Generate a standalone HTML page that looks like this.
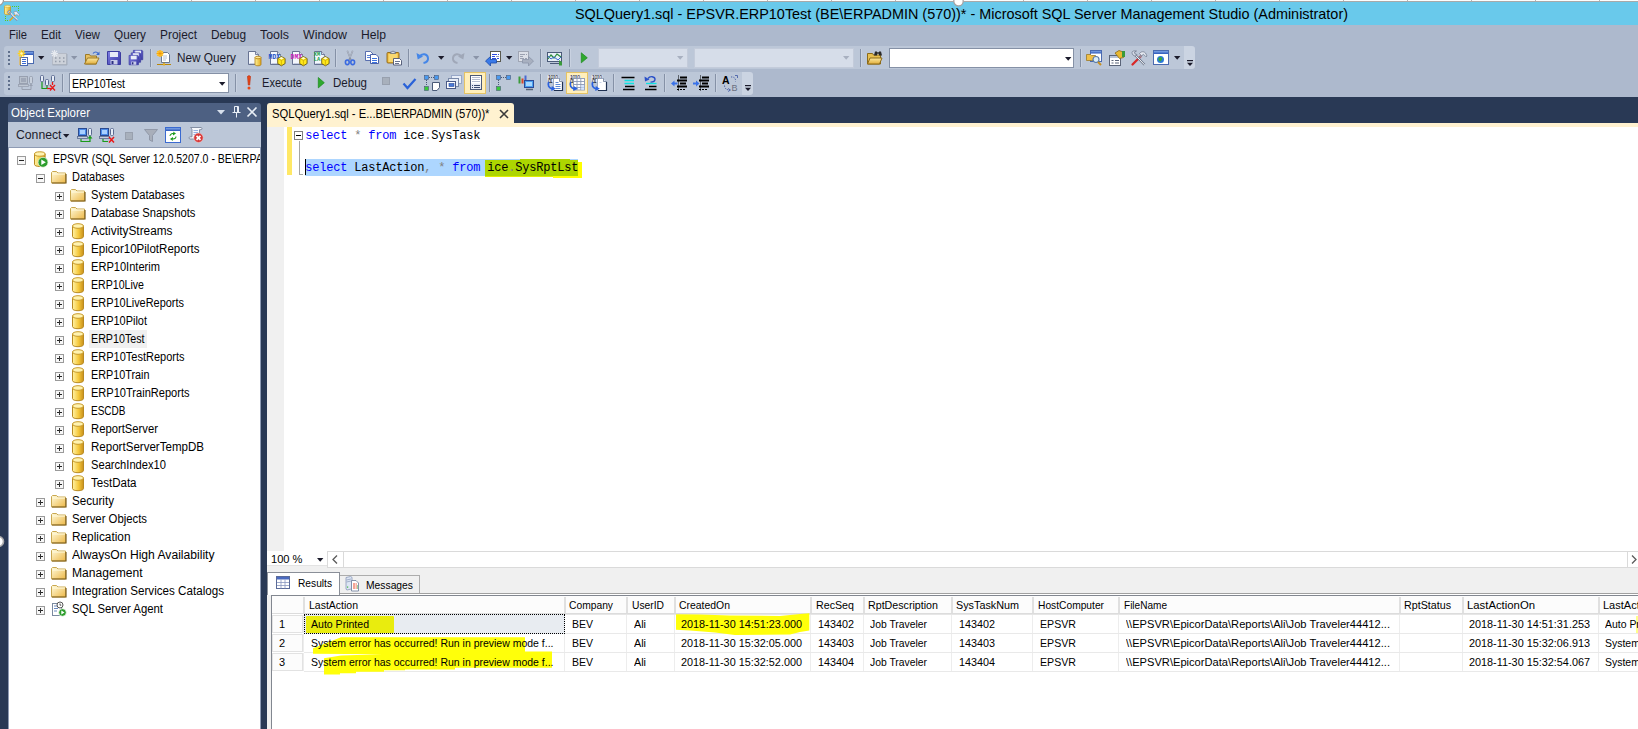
<!DOCTYPE html>
<html lang="en"><head><meta charset="utf-8"><title>SQLQuery1.sql - Microsoft SQL Server Management Studio</title><style>
html,body{margin:0;padding:0;}
body{width:1638px;height:729px;overflow:hidden;position:relative;background:#fff;font-family:"Liberation Sans", sans-serif;font-size:12px;color:#000;}
#root{position:absolute;left:0;top:0;width:1638px;height:729px;overflow:hidden;}
#root div,#root span.t,#root svg{position:absolute;}
#root div{box-sizing:border-box;}
span.t{white-space:pre;transform-origin:0 0;}
svg{overflow:visible;}
</style></head><body><div id="root">
<div style="left:0px;top:0px;width:1638px;height:2px;background:#fdfdfd;border-bottom:1px solid #a9a9a9;"></div>
<div style="left:63px;top:0px;width:1px;height:1px;background:#b4b4b4;"></div>
<div style="left:127px;top:0px;width:1px;height:1px;background:#b4b4b4;"></div>
<div style="left:191px;top:0px;width:1px;height:1px;background:#b4b4b4;"></div>
<div style="left:255px;top:0px;width:1px;height:1px;background:#b4b4b4;"></div>
<div style="left:319px;top:0px;width:1px;height:1px;background:#b4b4b4;"></div>
<div style="left:383px;top:0px;width:1px;height:1px;background:#b4b4b4;"></div>
<div style="left:447px;top:0px;width:1px;height:1px;background:#b4b4b4;"></div>
<div style="left:511px;top:0px;width:1px;height:1px;background:#b4b4b4;"></div>
<div style="left:575px;top:0px;width:1px;height:1px;background:#b4b4b4;"></div>
<div style="left:639px;top:0px;width:1px;height:1px;background:#b4b4b4;"></div>
<div style="left:703px;top:0px;width:1px;height:1px;background:#b4b4b4;"></div>
<div style="left:767px;top:0px;width:1px;height:1px;background:#b4b4b4;"></div>
<div style="left:831px;top:0px;width:1px;height:1px;background:#b4b4b4;"></div>
<div style="left:895px;top:0px;width:1px;height:1px;background:#b4b4b4;"></div>
<div style="left:959px;top:0px;width:1px;height:1px;background:#b4b4b4;"></div>
<div style="left:1023px;top:0px;width:1px;height:1px;background:#b4b4b4;"></div>
<div style="left:1087px;top:0px;width:1px;height:1px;background:#b4b4b4;"></div>
<div style="left:1151px;top:0px;width:1px;height:1px;background:#b4b4b4;"></div>
<div style="left:1215px;top:0px;width:1px;height:1px;background:#b4b4b4;"></div>
<div style="left:1279px;top:0px;width:1px;height:1px;background:#b4b4b4;"></div>
<div style="left:1343px;top:0px;width:1px;height:1px;background:#b4b4b4;"></div>
<div style="left:1407px;top:0px;width:1px;height:1px;background:#b4b4b4;"></div>
<div style="left:1471px;top:0px;width:1px;height:1px;background:#b4b4b4;"></div>
<div style="left:1535px;top:0px;width:1px;height:1px;background:#b4b4b4;"></div>
<div style="left:1599px;top:0px;width:1px;height:1px;background:#b4b4b4;"></div>
<div style="left:0px;top:2px;width:1638px;height:23px;background:#69C9EB;"></div>
<span id="t0" class="t " style="left:575px;top:3.5px;font-size:15px;line-height:20px;transform:scaleX(0.9609);">SQLQuery1.sql - EPSVR.ERP10Test (BE\ERPADMIN (570))* - Microsoft SQL Server Management Studio (Administrator)</span>
<div style="left:0px;top:25px;width:1638px;height:72px;background:#ADB9CD;"></div>
<span id="t1" class="t " style="left:9px;top:27px;font-size:12px;line-height:16px;color:#1B1B2B;transform:scaleX(0.9305);">File</span>
<span id="t2" class="t " style="left:41px;top:27px;font-size:12px;line-height:16px;color:#1B1B2B;transform:scaleX(0.9668);">Edit</span>
<span id="t3" class="t " style="left:75px;top:27px;font-size:12px;line-height:16px;color:#1B1B2B;transform:scaleX(0.9691);">View</span>
<span id="t4" class="t " style="left:114px;top:27px;font-size:12px;line-height:16px;color:#1B1B2B;transform:scaleX(0.9790);">Query</span>
<span id="t5" class="t " style="left:160px;top:27px;font-size:12px;line-height:16px;color:#1B1B2B;transform:scaleX(0.9904);">Project</span>
<span id="t6" class="t " style="left:211px;top:27px;font-size:12px;line-height:16px;color:#1B1B2B;transform:scaleX(0.9894);">Debug</span>
<span id="t7" class="t " style="left:260px;top:27px;font-size:12px;line-height:16px;color:#1B1B2B;transform:scaleX(1.0351);">Tools</span>
<span id="t8" class="t " style="left:303px;top:27px;font-size:12px;line-height:16px;color:#1B1B2B;transform:scaleX(1.0307);">Window</span>
<span id="t9" class="t " style="left:361px;top:27px;font-size:12px;line-height:16px;color:#1B1B2B;transform:scaleX(1.0127);">Help</span>
<div style="left:4px;top:46px;width:1180px;height:23px;background:#BCC7D8;border-radius:3px 0 0 3px;"></div>
<div style="left:1184px;top:46px;width:11px;height:23px;background:#CBD4E2;border-radius:0 3px 3px 0;"></div>
<div style="left:4px;top:72px;width:738px;height:23px;background:#BCC7D8;border-radius:3px 0 0 3px;"></div>
<div style="left:742px;top:72px;width:11px;height:23px;background:#CBD4E2;border-radius:0 3px 3px 0;"></div>
<div style="left:8px;top:51px;width:2px;height:2px;background:#60708C;"></div>
<div style="left:8px;top:55px;width:2px;height:2px;background:#60708C;"></div>
<div style="left:8px;top:59px;width:2px;height:2px;background:#60708C;"></div>
<div style="left:8px;top:63px;width:2px;height:2px;background:#60708C;"></div>
<div style="left:8px;top:76px;width:2px;height:2px;background:#60708C;"></div>
<div style="left:8px;top:80px;width:2px;height:2px;background:#60708C;"></div>
<div style="left:8px;top:84px;width:2px;height:2px;background:#60708C;"></div>
<div style="left:8px;top:88px;width:2px;height:2px;background:#60708C;"></div>
<div style="left:150px;top:49px;width:1px;height:18px;background:#8591A6;"></div>
<div style="left:151px;top:49px;width:1px;height:18px;background:#C9D2E1;"></div>
<div style="left:335px;top:49px;width:1px;height:18px;background:#8591A6;"></div>
<div style="left:336px;top:49px;width:1px;height:18px;background:#C9D2E1;"></div>
<div style="left:408px;top:49px;width:1px;height:18px;background:#8591A6;"></div>
<div style="left:409px;top:49px;width:1px;height:18px;background:#C9D2E1;"></div>
<div style="left:540px;top:49px;width:1px;height:18px;background:#8591A6;"></div>
<div style="left:541px;top:49px;width:1px;height:18px;background:#C9D2E1;"></div>
<div style="left:569px;top:49px;width:1px;height:18px;background:#8591A6;"></div>
<div style="left:570px;top:49px;width:1px;height:18px;background:#C9D2E1;"></div>
<div style="left:860px;top:49px;width:1px;height:18px;background:#8591A6;"></div>
<div style="left:861px;top:49px;width:1px;height:18px;background:#C9D2E1;"></div>
<div style="left:1080px;top:49px;width:1px;height:18px;background:#8591A6;"></div>
<div style="left:1081px;top:49px;width:1px;height:18px;background:#C9D2E1;"></div>
<div style="left:62px;top:74px;width:1px;height:18px;background:#8591A6;"></div>
<div style="left:63px;top:74px;width:1px;height:18px;background:#C9D2E1;"></div>
<div style="left:235px;top:74px;width:1px;height:18px;background:#8591A6;"></div>
<div style="left:236px;top:74px;width:1px;height:18px;background:#C9D2E1;"></div>
<div style="left:489px;top:74px;width:1px;height:18px;background:#8591A6;"></div>
<div style="left:490px;top:74px;width:1px;height:18px;background:#C9D2E1;"></div>
<div style="left:540px;top:74px;width:1px;height:18px;background:#8591A6;"></div>
<div style="left:541px;top:74px;width:1px;height:18px;background:#C9D2E1;"></div>
<div style="left:613px;top:74px;width:1px;height:18px;background:#8591A6;"></div>
<div style="left:614px;top:74px;width:1px;height:18px;background:#C9D2E1;"></div>
<div style="left:664px;top:74px;width:1px;height:18px;background:#8591A6;"></div>
<div style="left:665px;top:74px;width:1px;height:18px;background:#C9D2E1;"></div>
<div style="left:715px;top:74px;width:1px;height:18px;background:#8591A6;"></div>
<div style="left:716px;top:74px;width:1px;height:18px;background:#C9D2E1;"></div>
<svg width="0" height="0" style="left:0;top:0"><defs><linearGradient id="bl" x1="0" y1="0" x2="0" y2="1"><stop offset="0" stop-color="#7FA6E8"/><stop offset="1" stop-color="#2A55B8"/></linearGradient><linearGradient id="yl" x1="0" y1="0" x2="1" y2="0"><stop offset="0" stop-color="#FFF39A"/><stop offset="1" stop-color="#E0A81E"/></linearGradient><linearGradient id="fl" x1="0" y1="0" x2="0" y2="1"><stop offset="0" stop-color="#FCE9A0"/><stop offset="1" stop-color="#E2AE3C"/></linearGradient><linearGradient id="sv" x1="0" y1="0" x2="1" y2="1"><stop offset="0" stop-color="#8080E4"/><stop offset="1" stop-color="#3838A4"/></linearGradient></defs></svg>
<svg style="left:18px;top:50px;" width="16" height="16" viewBox="0 0 16 16"><rect x="3.500" y="1.500" width="12" height="12" fill="#fff" stroke="#4A6AB0"/><rect x="4" y="2" width="11" height="3" fill="url(#bl)"/><rect x="2.500" y="7.500" width="7" height="8" fill="#fff" stroke="#4A6AB0"/><path d="M4 9.500h4M4 11.500h4M4 13.500h4" stroke="#3A6AD0"/><path d="M3.50 3.50L7.30 3.50M3.50 3.50L6.19 6.19M3.50 3.50L3.50 7.30M3.50 3.50L0.81 6.19M3.50 3.50L-0.30 3.50M3.50 3.50L0.81 0.81M3.50 3.50L3.50 -0.30M3.50 3.50L6.19 0.81" stroke="#FFD21E" stroke-width="1.3" fill="none"/><circle cx="3.500" cy="3.500" r="1.200" fill="#FFF8C0"/><path d="M2 7v8" stroke="#F0B020" stroke-width="1"/></svg>
<svg style="left:38.3px;top:55.7px;" width="7" height="4" viewBox="0 0 7 4"><path d="M0 0h6.400l-3.200 3.700z" fill="#1B1B2B"/></svg>
<svg style="left:51px;top:50px;" width="16" height="16" viewBox="0 0 16 16"><rect x="1.500" y="3.500" width="14" height="11" fill="#CDD2DA" stroke="#B4BAC6"/><path d="M1.500 15h14.500v-11" fill="none" stroke="#A0A8B6" stroke-width="0.800"/><path d="M4 8h1.500M8 8h1.500M12 8h1.500M4 11.500h1.500M8 11.500h1.500M12 11.500h1.500" stroke="#959DAB" stroke-width="1.500"/><path d="M3.50 3.50L7.10 3.50M3.50 3.50L6.05 6.05M3.50 3.50L3.50 7.10M3.50 3.50L0.95 6.05M3.50 3.50L-0.10 3.50M3.50 3.50L0.95 0.95M3.50 3.50L3.50 -0.10M3.50 3.50L6.05 0.95" stroke="#E6EAF0" stroke-width="1.1" fill="none"/></svg>
<svg style="left:71.3px;top:55.7px;" width="7" height="4" viewBox="0 0 7 4"><path d="M0 0h6.400l-3.200 3.700z" fill="#8A94A8"/></svg>
<svg style="left:84px;top:50px;" width="16" height="16" viewBox="0 0 16 16"><path d="M1.500 4.500h4l1 1.500h6v8h-11z" fill="#E8C060" stroke="#9C7A28"/><path d="M0.500 14l3-6h11.500l-3 6z" fill="url(#fl)" stroke="#9C7A28"/><path d="M9 3.500c1.500-2 4-2 5 0" fill="none" stroke="#3A6AD0" stroke-width="1.200"/><path d="M15.500 1.500v3.500h-3.500z" fill="#3A6AD0"/></svg>
<svg style="left:107px;top:50px;" width="16" height="16" viewBox="0 0 16 16"><g transform="translate(0 1)"><path d="M0.500 0.500h12l1 1v12h-13z" fill="url(#sv)" stroke="#3C3CA0"/><rect x="3" y="1" width="8" height="5" fill="#E8ECF8"/><rect x="3.500" y="9" width="7" height="4.500" fill="#C8CCE8"/><rect x="4.500" y="10" width="2" height="3" fill="#2A2E80"/></g></svg>
<svg style="left:128px;top:50px;" width="16" height="16" viewBox="0 0 16 16"><g transform="scale(0.72)"><g transform="translate(7 0)"><path d="M0.500 0.500h12l1 1v12h-13z" fill="url(#sv)" stroke="#3C3CA0"/><rect x="3" y="1" width="8" height="5" fill="#E8ECF8"/><rect x="3.500" y="9" width="7" height="4.500" fill="#C8CCE8"/><rect x="4.500" y="10" width="2" height="3" fill="#2A2E80"/></g><g transform="translate(4 3.5)"><path d="M0.500 0.500h12l1 1v12h-13z" fill="url(#sv)" stroke="#3C3CA0"/><rect x="3" y="1" width="8" height="5" fill="#E8ECF8"/><rect x="3.500" y="9" width="7" height="4.500" fill="#C8CCE8"/><rect x="4.500" y="10" width="2" height="3" fill="#2A2E80"/></g><g transform="translate(1 7)"><path d="M0.500 0.500h12l1 1v12h-13z" fill="url(#sv)" stroke="#3C3CA0"/><rect x="3" y="1" width="8" height="5" fill="#E8ECF8"/><rect x="3.500" y="9" width="7" height="4.500" fill="#C8CCE8"/><rect x="4.500" y="10" width="2" height="3" fill="#2A2E80"/></g></g></svg>
<svg style="left:156px;top:50px;" width="16" height="16" viewBox="0 0 16 16"><path d="M5.500 2.500h6l2 2v8h-8z" fill="#fff" stroke="#6A7890"/><path d="M7 6h4M7 8h4M7 10h3" stroke="#B8C0D0"/><path d="M1 14.500h14" stroke="#B8860B" stroke-width="1"/><path d="M8 12.500v2" stroke="#B8860B"/><rect x="7" y="13.500" width="2" height="2" fill="#E8B020"/><circle cx="4" cy="3.500" r="3.300" fill="#FFD040"/><path d="M4 0v7M0.500 3.500h7M1.500 1l5 5M6.500 1l-5 5" stroke="#F09000" stroke-width="0.700"/></svg>
<span id="t10" class="t " style="left:177px;top:49.5px;font-size:12px;line-height:16px;color:#1B1B2B;transform:scaleX(0.9828);">New Query</span>
<svg style="left:247px;top:50px;" width="16" height="16" viewBox="0 0 16 16"><path d="M1.500 1.500h7l3 3v10h-10z" fill="#F4F7FC" stroke="#5A6688" stroke-width="0.900"/><path d="M8.500 1.500v3h3" fill="#D4DCEC" stroke="#5A6688" stroke-width="0.800"/><path d="M2.500 13.500h8.500v-8" fill="none" stroke="#C4CCE0" stroke-width="1"/><path d="M8 7.500v7c0 .8 1.300 1.300 3 1.300s3-.5 3-1.300v-7z" fill="url(#yl)" stroke="#B07C10" stroke-width="0.800"/><ellipse cx="11" cy="7.500" rx="3" ry="1.300" fill="#FFE890" stroke="#B07C10" stroke-width="0.800"/></svg>
<svg style="left:269px;top:50px;" width="16" height="16" viewBox="0 0 16 16"><path d="M1.500 1.500h7l3 3v10h-10z" fill="#F4F7FC" stroke="#5A6688" stroke-width="0.900"/><path d="M8.500 1.500v3h3" fill="#D4DCEC" stroke="#5A6688" stroke-width="0.800"/><path d="M2.500 13.500h8.500v-8" fill="none" stroke="#C4CCE0" stroke-width="1"/><text x="-0.4" y="8.8" font-family="Liberation Mono, monospace" font-weight="bold" font-size="6.5" fill="#1850C8" textLength="11.4" lengthAdjust="spacingAndGlyphs">MDX</text><path d="M12.400 6.600l3.700 2v5l-3.700 2.200-3.700-2.200v-5z" fill="#FFE81A" stroke="#5A4A08" stroke-width="0.800"/><path d="M8.700 8.600l3.700 1.800 3.700-1.800M12.400 10.400v5.400" fill="none" stroke="#C8A800" stroke-width="0.700"/><path d="M10 8.300l2.400-1.200 2.400 1.200-2.400 1.200z" fill="#FFFBD0"/></svg>
<svg style="left:291px;top:50px;" width="16" height="16" viewBox="0 0 16 16"><path d="M1.500 1.500h7l3 3v10h-10z" fill="#F4F7FC" stroke="#5A6688" stroke-width="0.900"/><path d="M8.500 1.500v3h3" fill="#D4DCEC" stroke="#5A6688" stroke-width="0.800"/><path d="M2.500 13.500h8.500v-8" fill="none" stroke="#C4CCE0" stroke-width="1"/><text x="-0.4" y="8.8" font-family="Liberation Mono, monospace" font-weight="bold" font-size="6.5" fill="#C818B8" textLength="11.4" lengthAdjust="spacingAndGlyphs">DMX</text><path d="M12.400 6.600l3.700 2v5l-3.700 2.200-3.700-2.200v-5z" fill="#FFE81A" stroke="#5A4A08" stroke-width="0.800"/><path d="M8.700 8.600l3.700 1.800 3.700-1.800M12.400 10.400v5.400" fill="none" stroke="#C8A800" stroke-width="0.700"/><path d="M10 8.300l2.400-1.200 2.400 1.200-2.400 1.200z" fill="#FFFBD0"/></svg>
<svg style="left:313px;top:50px;" width="16" height="16" viewBox="0 0 16 16"><path d="M1.500 1.500h7l3 3v10h-10z" fill="#F4F7FC" stroke="#5A6688" stroke-width="0.900"/><path d="M8.500 1.500v3h3" fill="#D4DCEC" stroke="#5A6688" stroke-width="0.800"/><path d="M2.500 13.500h8.500v-8" fill="none" stroke="#C4CCE0" stroke-width="1"/><text x="0.8" y="6" font-family="Liberation Mono, monospace" font-weight="bold" font-size="6" fill="#18A048" textLength="6.5" lengthAdjust="spacingAndGlyphs">XM</text><text x="0.8" y="11" font-family="Liberation Mono, monospace" font-weight="bold" font-size="6" fill="#18A048" textLength="6.5" lengthAdjust="spacingAndGlyphs">LA</text><path d="M12.400 6.600l3.700 2v5l-3.700 2.200-3.700-2.200v-5z" fill="#FFE81A" stroke="#5A4A08" stroke-width="0.800"/><path d="M8.700 8.600l3.700 1.800 3.700-1.800M12.400 10.400v5.400" fill="none" stroke="#C8A800" stroke-width="0.700"/><path d="M10 8.300l2.400-1.200 2.400 1.200-2.400 1.200z" fill="#FFFBD0"/></svg>
<svg style="left:342px;top:50px;" width="16" height="16" viewBox="0 0 16 16"><path d="M5.300 0.800l3.800 9.500M10.700 0.800l-3.800 9.500" stroke="#8A92A4" stroke-width="1.500" fill="none"/><path d="M5.300 0.800l2.700 6.500 2.700-6.500" stroke="#C8CED8" stroke-width="0.600" fill="none"/><ellipse cx="5.300" cy="12.300" rx="1.900" ry="2.300" fill="none" stroke="#3A6AE0" stroke-width="1.600"/><ellipse cx="10.700" cy="12.300" rx="1.900" ry="2.300" fill="none" stroke="#3A6AE0" stroke-width="1.600"/></svg>
<svg style="left:363px;top:50px;" width="16" height="16" viewBox="0 0 16 16"><path d="M2.500 1.500h5l2.500 2.500v6.500h-7.500z" fill="#fff" stroke="#4A62A8" stroke-width="0.900"/><path d="M4 5.500h3.500M4 7.500h4" stroke="#5A82D8" stroke-width="1"/><path d="M7.500 4.500h5.500l2.500 2.500v6.500h-8z" fill="#fff" stroke="#3A52A0" stroke-width="0.900"/><path d="M9 8.500h5M9 10.500h5M9 12.500h5" stroke="#3A72E0" stroke-width="1"/></svg>
<svg style="left:386px;top:50px;" width="16" height="16" viewBox="0 0 16 16"><rect x="1" y="2.500" width="12" height="10.500" rx="1" fill="#EDB63A" stroke="#8C6414" stroke-width="0.900"/><rect x="2.500" y="4" width="9" height="8" fill="#F8D870"/><path d="M4.500 3.500v-1.500h1.500c0-1.200 2-1.200 2 0h1.500v1.500z" fill="#D8DCE4" stroke="#5A6478" stroke-width="0.700"/><path d="M7.500 8.500h6l2 2v4.500h-8z" fill="#fff" stroke="#4A5470" stroke-width="0.900"/><path d="M9 11.500h5M9 13.500h4" stroke="#6A7490" stroke-width="1"/></svg>
<svg style="left:415px;top:50px;" width="16" height="16" viewBox="0 0 16 16"><path d="M4.500 6.500c2.500-3.500 8-3 8.500 1.500c0.300 2.800-1.500 4.500-4.500 5" fill="none" stroke="#4486E8" stroke-width="2"/><path d="M1.500 3l1.200 6.500 5.300-3z" fill="#4486E8"/></svg>
<svg style="left:438.3px;top:55.7px;" width="7" height="4" viewBox="0 0 7 4"><path d="M0 0h6.400l-3.200 3.700z" fill="#1B1B2B"/></svg>
<svg style="left:450px;top:50px;" width="16" height="16" viewBox="0 0 16 16"><path d="M11.500 6.500c-2.500-3.500-8-3-8.500 1.500c-0.300 2.800 1.500 4.500 4.500 5" fill="none" stroke="#A0A8B8" stroke-width="2"/><path d="M14.500 3l-1.200 6.500-5.300-3z" fill="#A0A8B8"/></svg>
<svg style="left:473.3px;top:55.7px;" width="7" height="4" viewBox="0 0 7 4"><path d="M0 0h6.400l-3.200 3.700z" fill="#8A94A8"/></svg>
<svg style="left:485px;top:50px;" width="16" height="16" viewBox="0 0 16 16"><rect x="5.500" y="1.500" width="10" height="10" fill="#fff" stroke="#5A5A50"/><path d="M7 4.500h5M13 4.500h1M7 6.500h3M7 8.500h4M12 8.500h2" stroke="#2A4AE0"/><path d="M11 6.500h3" stroke="#9AA0B0"/><path d="M0.500 11l5-4.500v3h6v3.500h-6v3z" fill="#3A7AE8" stroke="#1A4AA8" stroke-width="0.800"/></svg>
<svg style="left:506.3px;top:55.7px;" width="7" height="4" viewBox="0 0 7 4"><path d="M0 0h6.400l-3.200 3.700z" fill="#1B1B2B"/></svg>
<svg style="left:518px;top:50px;" width="16" height="16" viewBox="0 0 16 16"><rect x="0.500" y="1.500" width="10" height="10" fill="#DCE0E8" stroke="#A0A6B4"/><path d="M2 4.500h5M8 4.500h1M2 6.500h3M2 8.500h4M7 8.500h2" stroke="#9AA0B0"/><path d="M15.500 11l-5-4.500v3h-6v3.500h6v3z" fill="#A8B0C0" stroke="#8A94A8" stroke-width="0.800"/></svg>
<svg style="left:547px;top:50px;" width="17" height="16" viewBox="0 0 17 16"><rect x="0.500" y="2.500" width="14" height="9" fill="#E8F0F8" stroke="#4A5A78"/><path d="M1 9l3-4 3 3 3-4 4 3" fill="none" stroke="#2A8A3A" stroke-width="1.200"/><path d="M1 6l3 3 3-2 4 3 3-3" fill="none" stroke="#3A6AD0" stroke-width="1"/><path d="M3 13.500h9" stroke="#4A5A78"/><path d="M12 10l3 2v3.500h-3z" fill="#3A9A3A"/></svg>
<svg style="left:576px;top:50px;" width="16" height="16" viewBox="0 0 16 16"><path d="M5.300 2.800l6 5-6 5z" fill="#2EA82E" stroke="#1A8A1A" stroke-width="0.700"/></svg>
<div style="left:598px;top:48px;width:90px;height:20px;background:#D6DDE9;border:1px solid #C3CBDA;"></div>
<svg style="left:677.3px;top:55.7px;" width="7" height="4" viewBox="0 0 7 4"><path d="M0 0h6.400l-3.200 3.700z" fill="#A8B0C0"/></svg>
<div style="left:694px;top:48px;width:160px;height:20px;background:#D6DDE9;border:1px solid #C3CBDA;"></div>
<svg style="left:843.3px;top:55.7px;" width="7" height="4" viewBox="0 0 7 4"><path d="M0 0h6.400l-3.200 3.700z" fill="#A8B0C0"/></svg>
<svg style="left:867px;top:50px;" width="16" height="16" viewBox="0 0 16 16"><path d="M0.500 3.500h5l1 1.500h7v9h-13z" fill="#E8C050" stroke="#8C6A18"/><path d="M0.500 14l2.500-6h12l-2.500 6z" fill="url(#fl)" stroke="#8C6A18"/><path d="M8 1.500h2v4h-3zM12 1.500h2l1 4h-3z" fill="#2A2A2A"/><path d="M10 3h2" stroke="#2A2A2A" stroke-width="1.500"/></svg>
<div style="left:889px;top:48px;width:185px;height:20px;background:#fff;border:1px solid #8591A6;"></div>
<svg style="left:1065.3px;top:56.7px;" width="7" height="4" viewBox="0 0 7 4"><path d="M0 0h6.400l-3.200 3.700z" fill="#1B1B2B"/></svg>
<svg style="left:1086px;top:50px;" width="16" height="16" viewBox="0 0 16 16"><rect x="4.500" y="0.500" width="11" height="11" fill="#fff" stroke="#4A6AB0"/><rect x="5" y="1" width="10" height="2.500" fill="url(#bl)"/><path d="M0.500 4.500h4l1 1h4v5h-9z" fill="#F0C048" stroke="#9C7A28" stroke-width="0.800"/><circle cx="10" cy="9.500" r="3" fill="#D8ECF8" stroke="#5A7AA8" stroke-width="1.200"/><path d="M12 12l3 3" stroke="#C89020" stroke-width="2"/></svg>
<svg style="left:1109px;top:50px;" width="16" height="16" viewBox="0 0 16 16"><rect x="0.500" y="5.500" width="11" height="10" fill="#fff" stroke="#5A6478"/><rect x="1" y="6" width="10" height="2" fill="#B8C4D8"/><path d="M2.500 10.500h2M6 10.500h4M2.500 13h2M6 13h4" stroke="#5A6478"/><path d="M6 3l4-2.500 5.500 2-1 5-4 1z" fill="#E8B830" stroke="#8C6A18" stroke-width="0.800"/><rect x="13" y="1" width="3" height="6" fill="#3A9A3A"/></svg>
<svg style="left:1131px;top:50px;" width="16" height="16" viewBox="0 0 16 16"><path d="M1.500 14.500l8-8" stroke="#D82828" stroke-width="2.300" stroke-linecap="round"/><path d="M8 8l3-3" stroke="#8A92A4" stroke-width="1.500"/><path d="M13.500 14.800l-9-9.500" stroke="#6A7488" stroke-width="2.200"/><path d="M13.500 14.800l-9-9.500" stroke="#F4F6FA" stroke-width="1"/><path d="M8.500 3.500c1.500-2 4-2.500 6-.5l1.500 3-1 .8-2.500-2.500-2 1.500z" fill="#E4E8F0" stroke="#6A7488" stroke-width="0.700"/><path d="M1 2.500c0 2 1.500 3.500 3.500 3.500l1.500-1.500-2-.5-.5-2 2-1c-2-.5-4.500 0-4.500 1.500z" fill="#D4DAE6" stroke="#6A7488" stroke-width="0.700"/></svg>
<svg style="left:1153px;top:50px;" width="16" height="16" viewBox="0 0 16 16"><rect x="0.500" y="0.500" width="15" height="14" fill="#fff" stroke="#4A6AB0"/><rect x="1" y="1" width="14" height="3" fill="url(#bl)"/><circle cx="7.500" cy="9.500" r="3.500" fill="#2A7AD8"/><path d="M5.500 8c1-1.500 3-1.500 3.500 0s-1 3-2 3.500c-1-.5-2-2-1.500-3.500z" fill="#3AA83A"/></svg>
<svg style="left:1174.3px;top:55.7px;" width="7" height="4" viewBox="0 0 7 4"><path d="M0 0h6.400l-3.200 3.700z" fill="#1B1B2B"/></svg>
<svg style="left:1187px;top:60px;" width="7" height="6" viewBox="0 0 7 6"><path d="M0 0.600h6" stroke="#1B1B2B" stroke-width="1.200"/><path d="M0 2.800h6l-3 3.200z" fill="#1B1B2B"/></svg>
<svg style="left:18px;top:75px;" width="16" height="16" viewBox="0 0 16 16"><rect x="1.500" y="1.500" width="8" height="7" fill="#B8C0CC" stroke="#98A0B0"/><rect x="3" y="3" width="5" height="4" fill="#A0A8B8"/><rect x="0.500" y="9.500" width="10" height="2" fill="#C0C8D4" stroke="#98A0B0" stroke-width="0.800"/><rect x="11.500" y="1.500" width="3" height="7" rx="1" fill="#C8D0DC" stroke="#98A0B0"/><path d="M4 12v2.500h9v-5" fill="none" stroke="#98A0B0"/><path d="M11 11l2-2.500 2 2.500z" fill="#98A0B0"/></svg>
<svg style="left:40px;top:75px;" width="16" height="16" viewBox="0 0 16 16"><rect x="0.500" y="0.500" width="3" height="6" rx="1" fill="#E8EEF8" stroke="#5A6A90"/><rect x="5.500" y="4.500" width="3" height="6" rx="1" fill="#E8EEF8" stroke="#5A6A90"/><rect x="11.500" y="0.500" width="3" height="6" rx="1" fill="#E8EEF8" stroke="#5A6A90"/><path d="M2 7v6.500h5v-3" fill="none" stroke="#1A9A1A" stroke-width="1.200"/><path d="M7 13.500h4" stroke="#E81818" stroke-width="1.200"/><path d="M10 10l5 5.500M15 10l-5 5.500M12.500 7v3" stroke="#E81818" stroke-width="1.300"/></svg>
<div style="left:69px;top:73px;width:160px;height:20px;background:#fff;border:1px solid #8591A6;"></div>
<span id="t11" class="t " style="left:72px;top:75.5px;font-size:12px;line-height:16px;transform:scaleX(0.8829);">ERP10Test</span>
<svg style="left:219.3px;top:81.7px;" width="7" height="4" viewBox="0 0 7 4"><path d="M0 0h6.400l-3.200 3.700z" fill="#1B1B2B"/></svg>
<svg style="left:241px;top:75px;" width="16" height="16" viewBox="0 0 16 16"><path d="M6.500 1.500c0-1 3-1 3 0l-.800 8.500h-1.400z" fill="#E84818" stroke="#B82808" stroke-width="0.600"/><circle cx="8" cy="13" r="1.500" fill="#E84818"/></svg>
<span id="t12" class="t " style="left:262px;top:74.5px;font-size:12px;line-height:16px;color:#1B1B2B;transform:scaleX(0.9225);">Execute</span>
<svg style="left:313px;top:75px;" width="16" height="16" viewBox="0 0 16 16"><path d="M5.300 2.500l6 5.200-6 5.200z" fill="#2EA82E" stroke="#1A8A1A" stroke-width="0.700"/></svg>
<span id="t13" class="t " style="left:333px;top:74.5px;font-size:12px;line-height:16px;color:#1B1B2B;transform:scaleX(0.9611);">Debug</span>
<svg style="left:378px;top:75px;" width="16" height="16" viewBox="0 0 16 16"><rect x="4" y="2" width="8" height="8" fill="#98A0AE"/><rect x="5" y="3" width="6" height="6" fill="#A8B0BC"/></svg>
<svg style="left:401px;top:75px;" width="16" height="16" viewBox="0 0 16 16"><path d="M2.500 8.500l4 4.500 8-9" fill="none" stroke="#2A62D8" stroke-width="2.200"/></svg>
<svg style="left:424px;top:75px;" width="16" height="16" viewBox="0 0 16 16"><rect x="0.5" y="0.5" width="4" height="4" fill="#4A9AF0" stroke="#4A5A78" stroke-width="0.600"/><rect x="10.5" y="0.5" width="4" height="4" fill="#4A9AF0" stroke="#4A5A78" stroke-width="0.600"/><rect x="0.5" y="11.5" width="4" height="4" fill="#3AC83A" stroke="#4A5A78" stroke-width="0.600"/><path d="M5 2.500h5M2.500 5v6" stroke="#4A5A78" stroke-dasharray="1 1"/><path d="M8.500 7.500h7v5l-2.500 3h-4.500z" fill="#fff" stroke="#4A5A78"/></svg>
<svg style="left:446px;top:75px;" width="16" height="16" viewBox="0 0 16 16"><rect x="5.500" y="0.500" width="10" height="8" fill="#E8EEF8" stroke="#98A8C8"/><rect x="2.500" y="3.500" width="10" height="8" fill="#E8EEF8" stroke="#7888A8"/><rect x="0.500" y="6.500" width="9" height="7" fill="#fff" stroke="#4A5A88"/><rect x="3" y="8.500" width="5" height="3" fill="#4A7AD8" stroke="#2A4A98" stroke-width="0.600"/></svg>
<div style="left:464px;top:72px;width:22px;height:22px;background:#FFEFBB;border:1px solid #E5C365;"></div>
<svg style="left:467px;top:75px;" width="16" height="16" viewBox="0 0 16 16"><rect x="3.500" y="0.500" width="11" height="14" fill="#fff" stroke="#4A5878"/><path d="M5 2.500h8M5 4.500h8M5 6.500h8" stroke="#B4BCD0"/><rect x="4" y="8.500" width="10" height="5.500" fill="#E4E8F4"/><path d="M5 10.500h1M7 10.500h6M5 12.500h1M7 12.500h6" stroke="#3A4A70"/></svg>
<svg style="left:496px;top:75px;" width="16" height="16" viewBox="0 0 16 16"><rect x="0.5" y="0.5" width="4" height="4" fill="#4A9AF0" stroke="#4A5A78" stroke-width="0.600"/><rect x="10.5" y="0.5" width="4" height="4" fill="#4A9AF0" stroke="#4A5A78" stroke-width="0.600"/><rect x="0.5" y="11.5" width="4" height="4" fill="#3AC83A" stroke="#4A5A78" stroke-width="0.600"/><path d="M5 2.500h5M2.500 5v6" stroke="#4A5A78" stroke-dasharray="1 1"/></svg>
<svg style="left:518px;top:75px;" width="16" height="16" viewBox="0 0 16 16"><rect x="0.500" y="1.500" width="2" height="7" fill="#3A9A3A"/><rect x="3.500" y="3.500" width="2" height="5" fill="#D84A2A"/><rect x="6.500" y="0.500" width="2" height="8" fill="#4A6AD0"/><rect x="6.500" y="5.500" width="9" height="7" fill="#4AA0F0" stroke="#2A4A98"/><rect x="8" y="7" width="6" height="4" fill="#A8D8FF"/><path d="M8 14.500h7" stroke="#5A6478" stroke-width="1.500"/></svg>
<svg style="left:547px;top:75px;" width="16" height="16" viewBox="0 0 16 16"><rect x="0.500" y="0.300" width="11" height="6.500" fill="#E8EEFA"/><text x="1" y="4" font-family="Liberation Sans, sans-serif" font-size="5" fill="#000" textLength="10" lengthAdjust="spacing">1010</text><text x="1" y="7.800" font-family="Liberation Sans, sans-serif" font-size="5" fill="#000" textLength="4.500" lengthAdjust="spacing">01</text><path d="M6.500 3.500h6l3 3v9h-9z" fill="#fff" stroke="#8A98B4" stroke-width="0.800"/><path d="M7 15.500h8.500v-8.500" fill="none" stroke="#1E3050" stroke-width="1.200"/><path d="M12.500 3.500v3h3" fill="#DCE4F0" stroke="#5A6A88" stroke-width="0.700"/><path d="M8.500 7.500h3M8.500 9.500h5M8.500 11.500h5M8.500 13.500h5" stroke="#4A7AD0" stroke-width="0.900"/><path d="M1.800 6.800c-1.500 3.500 0 6.200 3.500 7" fill="none" stroke="#2A62E0" stroke-width="1.700"/><path d="M4.800 11l4 2.800-4.500 2.200z" fill="#2A62E0"/></svg>
<div style="left:566px;top:72px;width:22px;height:22px;background:#FFEFBB;border:1px solid #E5C365;"></div>
<svg style="left:569px;top:75px;" width="16" height="16" viewBox="0 0 16 16"><rect x="0.500" y="0.300" width="11" height="6.500" fill="#E8EEFA"/><text x="1" y="4" font-family="Liberation Sans, sans-serif" font-size="5" fill="#000" textLength="10" lengthAdjust="spacing">1010</text><text x="1" y="7.800" font-family="Liberation Sans, sans-serif" font-size="5" fill="#000" textLength="4.500" lengthAdjust="spacing">01</text><rect x="4.500" y="3.500" width="11" height="11.500" fill="#fff" stroke="#8A98B4" stroke-width="0.900"/><path d="M4.500 6.500h11M4.500 9.500h11M4.500 12.500h11M8 3.500v11.500M11.800 3.500v11.500" stroke="#8A98B4" stroke-width="0.900"/><rect x="12.200" y="10" width="3" height="5" fill="#C4DCFF" opacity="0.700"/><path d="M1.800 6.800c-1.500 3.500 0 6.200 3.500 7" fill="none" stroke="#2A62E0" stroke-width="1.700"/><path d="M4.800 11l4 2.800-4.500 2.200z" fill="#2A62E0"/></svg>
<svg style="left:591px;top:75px;" width="16" height="16" viewBox="0 0 16 16"><rect x="0.500" y="0.300" width="11" height="6.500" fill="#E8EEFA"/><text x="1" y="4" font-family="Liberation Sans, sans-serif" font-size="5" fill="#000" textLength="10" lengthAdjust="spacing">1010</text><text x="1" y="7.800" font-family="Liberation Sans, sans-serif" font-size="5" fill="#000" textLength="4.500" lengthAdjust="spacing">01</text><path d="M6.500 3.500h6l3 3v9h-9z" fill="#fff" stroke="#8A98B4" stroke-width="0.800"/><path d="M7 15.500h8.500v-8.500" fill="none" stroke="#1E3050" stroke-width="1.200"/><path d="M12.500 3.500v3h3" fill="#DCE4F0" stroke="#5A6A88" stroke-width="0.700"/><path d="M8.500 7.500h2" stroke="#C4D0E8" stroke-width="0.900"/><path d="M1.800 6.800c-1.500 3.500 0 6.200 3.500 7" fill="none" stroke="#2A62E0" stroke-width="1.700"/><path d="M4.800 11l4 2.800-4.500 2.200z" fill="#2A62E0"/></svg>
<svg style="left:620px;top:75px;" width="16" height="16" viewBox="0 0 16 16"><path d="M1.500 2.500h13M5 11.500h9.500M3 14.500h11.500" stroke="#000" stroke-width="1.300"/><path d="M4.500 5.500h9.500M4.500 8.500h9.500" stroke="#10E0E0" stroke-width="1.300"/></svg>
<svg style="left:642px;top:75px;" width="16" height="16" viewBox="0 0 16 16"><path d="M7 11.500h7.500M3 14.500h11.500" stroke="#000" stroke-width="1.300"/><path d="M4 8.500h10.500" stroke="#10E0E0" stroke-width="1.300"/><path d="M6 3.500c2-3 7-2 7 .8s-2.500 2.800-4.500 2.800" fill="none" stroke="#2A50C8" stroke-width="1.400"/><path d="M2.500 1.500l.500 5 4.500-2z" fill="#2A50C8"/></svg>
<svg style="left:671px;top:75px;" width="16" height="16" viewBox="0 0 16 16"><path d="M9 2.500h7M6 5.500h10M9 8.500h6M6 11.500h10" stroke="#000" stroke-width="1.800"/><path d="M6 14.500h9" stroke="#000" stroke-width="1.200" stroke-dasharray="2 1"/><path d="M7.500 0.500v16" stroke="#000" stroke-width="1" stroke-dasharray="1 1"/><path d="M0 8.500l3.500-3v2h3v2h-3v2z" fill="#3A72E8"/></svg>
<svg style="left:693px;top:75px;" width="16" height="16" viewBox="0 0 16 16"><path d="M9 2.500h7M6 5.500h10M9 8.500h6M6 11.500h10" stroke="#000" stroke-width="1.800"/><path d="M6 14.500h9" stroke="#000" stroke-width="1.200" stroke-dasharray="2 1"/><path d="M7.500 0.500v16" stroke="#000" stroke-width="1" stroke-dasharray="1 1"/><path d="M6.500 8.500l-3.500-3v2h-3v2h3v2z" fill="#3A72E8"/></svg>
<svg style="left:722px;top:75px;" width="16" height="16" viewBox="0 0 16 16"><text x="0" y="9" font-family="Liberation Sans, sans-serif" font-weight="bold" font-size="10.500" fill="#000">A</text><text x="9.500" y="16" font-family="Liberation Sans, sans-serif" font-size="9" fill="#6A7080">B</text><path d="M9 2c3-.5 5 1.500 4.500 4.500M2.500 10.500c0 3 2 4.500 5.500 4.500" fill="none" stroke="#4A62A8" stroke-width="1" stroke-dasharray="1.200 1.200"/><path d="M13 0.500h2.500v2.500M6 13.500l2.500 1.500-2.500 1.500" fill="none" stroke="#4A62A8" stroke-width="0.900"/></svg>
<svg style="left:745px;top:85px;" width="7" height="6" viewBox="0 0 7 6"><path d="M0 0.600h6" stroke="#1B1B2B" stroke-width="1.200"/><path d="M0 2.800h6l-3 3.200z" fill="#1B1B2B"/></svg>
<div style="left:0px;top:97px;width:1638px;height:632px;background:#293955;"></div>
<div style="left:8px;top:103px;width:253px;height:19px;background:#4D6082;border-radius:3px 3px 0 0;"></div>
<span id="t14" class="t " style="left:10.5px;top:104.5px;font-size:12px;line-height:16px;color:#fff;transform:scaleX(0.9552);">Object Explorer</span>
<div style="left:8px;top:122px;width:253px;height:26px;background:#BCC7D8;"></div>
<span id="t15" class="t " style="left:15.5px;top:126.5px;font-size:12px;line-height:16px;color:#1B1B2B;transform:scaleX(1.0178);">Connect</span>
<div style="left:8px;top:147px;width:253px;height:1px;background:#8E9BB4;"></div>
<div style="left:8px;top:148px;width:253px;height:581px;background:#fff;border-left:1px solid #8E9BB4;border-right:1px solid #8E9BB4;"></div>
<svg width="0" height="0" style="left:0;top:0"><defs><linearGradient id="fg" x1="0" y1="0" x2="1" y2="1"><stop offset="0" stop-color="#FFFBDC"/><stop offset="1" stop-color="#EDB848"/></linearGradient><linearGradient id="dg" x1="0" y1="0" x2="1" y2="0"><stop offset="0" stop-color="#FFF3A8"/><stop offset="0.55" stop-color="#F5C83C"/><stop offset="1" stop-color="#C8901C"/></linearGradient></defs></svg>
<svg style="left:17px;top:156.0px;" width="9" height="9" viewBox="0 0 9 9"><rect x="0.5" y="0.5" width="8" height="8" fill="#F7F7F7" stroke="#9A9A9A"/><path d="M2 4.5h5" stroke="#222" stroke-width="1"/></svg>
<svg style="left:32px;top:151px;" width="17" height="17" viewBox="0 0 17 17"><path d="M2.500 3v10.500c0 1.200 2.300 2 5.300 2s5.300-.8 5.300-2V3z" fill="url(#dg)" stroke="#B88A22"/><ellipse cx="7.800" cy="3" rx="5.300" ry="2.200" fill="#FFF3B0" stroke="#C89A2A"/><circle cx="11" cy="11.300" r="5" fill="#2E9E2E" stroke="#E8F4E0" stroke-width="0.800"/><path d="M9.300 8.500l4.500 2.800-4.500 2.800z" fill="#fff"/></svg>
<div style="left:53px;top:149.5px;width:207px;height:18px;overflow:hidden;"><span id="t16" class="t " style="left:0px;top:1px;font-size:12px;line-height:16px;transform:scaleX(0.8784);">EPSVR (SQL Server 12.0.5207.0 - BE\ERPADMIN)</span></div>
<svg style="left:36px;top:174.0px;" width="9" height="9" viewBox="0 0 9 9"><rect x="0.5" y="0.5" width="8" height="8" fill="#F7F7F7" stroke="#9A9A9A"/><path d="M2 4.5h5" stroke="#222" stroke-width="1"/></svg>
<svg style="left:51px;top:169px;" width="16" height="16" viewBox="0 0 16 16"><path d="M0.500 14v-10.500l1-1h4l1.500 1.500h7.500v10z" fill="url(#fg)" stroke="#C9A850" stroke-width="1"/><path d="M1 14h14v-9" fill="none" stroke="#7A5A18" stroke-width="1.200"/><path d="M1.500 5h12.500" stroke="#FFFBE0" stroke-width="1"/></svg>
<span id="t17" class="t " style="left:72px;top:168.5px;font-size:12px;line-height:16px;transform:scaleX(0.9150);">Databases</span>
<svg style="left:55px;top:192.0px;" width="9" height="9" viewBox="0 0 9 9"><rect x="0.5" y="0.5" width="8" height="8" fill="#F7F7F7" stroke="#9A9A9A"/><path d="M2 4.5h5" stroke="#222" stroke-width="1"/><path d="M4.5 2v5" stroke="#333" stroke-width="1"/></svg>
<svg style="left:70px;top:187px;" width="16" height="16" viewBox="0 0 16 16"><path d="M0.500 14v-10.500l1-1h4l1.500 1.500h7.500v10z" fill="url(#fg)" stroke="#C9A850" stroke-width="1"/><path d="M1 14h14v-9" fill="none" stroke="#7A5A18" stroke-width="1.200"/><path d="M1.500 5h12.500" stroke="#FFFBE0" stroke-width="1"/></svg>
<span id="t18" class="t " style="left:91px;top:186.5px;font-size:12px;line-height:16px;transform:scaleX(0.9283);">System Databases</span>
<svg style="left:55px;top:210.0px;" width="9" height="9" viewBox="0 0 9 9"><rect x="0.5" y="0.5" width="8" height="8" fill="#F7F7F7" stroke="#9A9A9A"/><path d="M2 4.5h5" stroke="#222" stroke-width="1"/><path d="M4.5 2v5" stroke="#333" stroke-width="1"/></svg>
<svg style="left:70px;top:205px;" width="16" height="16" viewBox="0 0 16 16"><path d="M0.500 14v-10.500l1-1h4l1.500 1.500h7.500v10z" fill="url(#fg)" stroke="#C9A850" stroke-width="1"/><path d="M1 14h14v-9" fill="none" stroke="#7A5A18" stroke-width="1.200"/><path d="M1.500 5h12.500" stroke="#FFFBE0" stroke-width="1"/></svg>
<span id="t19" class="t " style="left:91px;top:204.5px;font-size:12px;line-height:16px;transform:scaleX(0.9379);">Database Snapshots</span>
<svg style="left:55px;top:228.0px;" width="9" height="9" viewBox="0 0 9 9"><rect x="0.5" y="0.5" width="8" height="8" fill="#F7F7F7" stroke="#9A9A9A"/><path d="M2 4.5h5" stroke="#222" stroke-width="1"/><path d="M4.5 2v5" stroke="#333" stroke-width="1"/></svg>
<svg style="left:70px;top:223px;" width="16" height="17" viewBox="0 0 16 17"><path d="M2.500 3v10.600c0 1.300 2.400 2.100 5.500 2.100s5.500-.8 5.500-2.100V3z" fill="url(#dg)" stroke="#B88A22" stroke-width="1"/><ellipse cx="8" cy="3" rx="5.500" ry="2.300" fill="#FFF3B0" stroke="#C89A2A" stroke-width="1"/></svg>
<span id="t20" class="t " style="left:91px;top:222.5px;font-size:12px;line-height:16px;transform:scaleX(0.9856);">ActivityStreams</span>
<svg style="left:55px;top:246.0px;" width="9" height="9" viewBox="0 0 9 9"><rect x="0.5" y="0.5" width="8" height="8" fill="#F7F7F7" stroke="#9A9A9A"/><path d="M2 4.5h5" stroke="#222" stroke-width="1"/><path d="M4.5 2v5" stroke="#333" stroke-width="1"/></svg>
<svg style="left:70px;top:241px;" width="16" height="17" viewBox="0 0 16 17"><path d="M2.500 3v10.600c0 1.300 2.400 2.100 5.500 2.100s5.500-.8 5.500-2.100V3z" fill="url(#dg)" stroke="#B88A22" stroke-width="1"/><ellipse cx="8" cy="3" rx="5.500" ry="2.300" fill="#FFF3B0" stroke="#C89A2A" stroke-width="1"/></svg>
<span id="t21" class="t " style="left:91px;top:240.5px;font-size:12px;line-height:16px;transform:scaleX(0.9624);">Epicor10PilotReports</span>
<svg style="left:55px;top:264.0px;" width="9" height="9" viewBox="0 0 9 9"><rect x="0.5" y="0.5" width="8" height="8" fill="#F7F7F7" stroke="#9A9A9A"/><path d="M2 4.5h5" stroke="#222" stroke-width="1"/><path d="M4.5 2v5" stroke="#333" stroke-width="1"/></svg>
<svg style="left:70px;top:259px;" width="16" height="17" viewBox="0 0 16 17"><path d="M2.500 3v10.600c0 1.300 2.400 2.100 5.500 2.100s5.500-.8 5.500-2.100V3z" fill="url(#dg)" stroke="#B88A22" stroke-width="1"/><ellipse cx="8" cy="3" rx="5.500" ry="2.300" fill="#FFF3B0" stroke="#C89A2A" stroke-width="1"/></svg>
<span id="t22" class="t " style="left:91px;top:258.5px;font-size:12px;line-height:16px;transform:scaleX(0.9237);">ERP10Interim</span>
<svg style="left:55px;top:282.0px;" width="9" height="9" viewBox="0 0 9 9"><rect x="0.5" y="0.5" width="8" height="8" fill="#F7F7F7" stroke="#9A9A9A"/><path d="M2 4.5h5" stroke="#222" stroke-width="1"/><path d="M4.5 2v5" stroke="#333" stroke-width="1"/></svg>
<svg style="left:70px;top:277px;" width="16" height="17" viewBox="0 0 16 17"><path d="M2.500 3v10.600c0 1.300 2.400 2.100 5.500 2.100s5.500-.8 5.500-2.100V3z" fill="url(#dg)" stroke="#B88A22" stroke-width="1"/><ellipse cx="8" cy="3" rx="5.500" ry="2.300" fill="#FFF3B0" stroke="#C89A2A" stroke-width="1"/></svg>
<span id="t23" class="t " style="left:91px;top:276.5px;font-size:12px;line-height:16px;transform:scaleX(0.8826);">ERP10Live</span>
<svg style="left:55px;top:300.0px;" width="9" height="9" viewBox="0 0 9 9"><rect x="0.5" y="0.5" width="8" height="8" fill="#F7F7F7" stroke="#9A9A9A"/><path d="M2 4.5h5" stroke="#222" stroke-width="1"/><path d="M4.5 2v5" stroke="#333" stroke-width="1"/></svg>
<svg style="left:70px;top:295px;" width="16" height="17" viewBox="0 0 16 17"><path d="M2.500 3v10.600c0 1.300 2.400 2.100 5.500 2.100s5.500-.8 5.500-2.100V3z" fill="url(#dg)" stroke="#B88A22" stroke-width="1"/><ellipse cx="8" cy="3" rx="5.500" ry="2.300" fill="#FFF3B0" stroke="#C89A2A" stroke-width="1"/></svg>
<span id="t24" class="t " style="left:91px;top:294.5px;font-size:12px;line-height:16px;transform:scaleX(0.9112);">ERP10LiveReports</span>
<svg style="left:55px;top:318.0px;" width="9" height="9" viewBox="0 0 9 9"><rect x="0.5" y="0.5" width="8" height="8" fill="#F7F7F7" stroke="#9A9A9A"/><path d="M2 4.5h5" stroke="#222" stroke-width="1"/><path d="M4.5 2v5" stroke="#333" stroke-width="1"/></svg>
<svg style="left:70px;top:313px;" width="16" height="17" viewBox="0 0 16 17"><path d="M2.500 3v10.600c0 1.300 2.400 2.100 5.500 2.100s5.500-.8 5.500-2.100V3z" fill="url(#dg)" stroke="#B88A22" stroke-width="1"/><ellipse cx="8" cy="3" rx="5.500" ry="2.300" fill="#FFF3B0" stroke="#C89A2A" stroke-width="1"/></svg>
<span id="t25" class="t " style="left:91px;top:312.5px;font-size:12px;line-height:16px;transform:scaleX(0.9124);">ERP10Pilot</span>
<div style="left:89px;top:330px;width:58px;height:18px;background:#F0F0F0;"></div>
<svg style="left:55px;top:336.0px;" width="9" height="9" viewBox="0 0 9 9"><rect x="0.5" y="0.5" width="8" height="8" fill="#F7F7F7" stroke="#9A9A9A"/><path d="M2 4.5h5" stroke="#222" stroke-width="1"/><path d="M4.5 2v5" stroke="#333" stroke-width="1"/></svg>
<svg style="left:70px;top:331px;" width="16" height="17" viewBox="0 0 16 17"><path d="M2.500 3v10.600c0 1.300 2.400 2.100 5.500 2.100s5.500-.8 5.500-2.100V3z" fill="url(#dg)" stroke="#B88A22" stroke-width="1"/><ellipse cx="8" cy="3" rx="5.500" ry="2.300" fill="#FFF3B0" stroke="#C89A2A" stroke-width="1"/></svg>
<span id="t26" class="t " style="left:91px;top:330.5px;font-size:12px;line-height:16px;transform:scaleX(0.8912);">ERP10Test</span>
<svg style="left:55px;top:354.0px;" width="9" height="9" viewBox="0 0 9 9"><rect x="0.5" y="0.5" width="8" height="8" fill="#F7F7F7" stroke="#9A9A9A"/><path d="M2 4.5h5" stroke="#222" stroke-width="1"/><path d="M4.5 2v5" stroke="#333" stroke-width="1"/></svg>
<svg style="left:70px;top:349px;" width="16" height="17" viewBox="0 0 16 17"><path d="M2.500 3v10.600c0 1.300 2.400 2.100 5.500 2.100s5.500-.8 5.500-2.100V3z" fill="url(#dg)" stroke="#B88A22" stroke-width="1"/><ellipse cx="8" cy="3" rx="5.500" ry="2.300" fill="#FFF3B0" stroke="#C89A2A" stroke-width="1"/></svg>
<span id="t27" class="t " style="left:91px;top:348.5px;font-size:12px;line-height:16px;transform:scaleX(0.9162);">ERP10TestReports</span>
<svg style="left:55px;top:372.0px;" width="9" height="9" viewBox="0 0 9 9"><rect x="0.5" y="0.5" width="8" height="8" fill="#F7F7F7" stroke="#9A9A9A"/><path d="M2 4.5h5" stroke="#222" stroke-width="1"/><path d="M4.5 2v5" stroke="#333" stroke-width="1"/></svg>
<svg style="left:70px;top:367px;" width="16" height="17" viewBox="0 0 16 17"><path d="M2.500 3v10.600c0 1.300 2.400 2.100 5.500 2.100s5.500-.8 5.500-2.100V3z" fill="url(#dg)" stroke="#B88A22" stroke-width="1"/><ellipse cx="8" cy="3" rx="5.500" ry="2.300" fill="#FFF3B0" stroke="#C89A2A" stroke-width="1"/></svg>
<span id="t28" class="t " style="left:91px;top:366.5px;font-size:12px;line-height:16px;transform:scaleX(0.9011);">ERP10Train</span>
<svg style="left:55px;top:390.0px;" width="9" height="9" viewBox="0 0 9 9"><rect x="0.5" y="0.5" width="8" height="8" fill="#F7F7F7" stroke="#9A9A9A"/><path d="M2 4.5h5" stroke="#222" stroke-width="1"/><path d="M4.5 2v5" stroke="#333" stroke-width="1"/></svg>
<svg style="left:70px;top:385px;" width="16" height="17" viewBox="0 0 16 17"><path d="M2.500 3v10.600c0 1.300 2.400 2.100 5.500 2.100s5.500-.8 5.500-2.100V3z" fill="url(#dg)" stroke="#B88A22" stroke-width="1"/><ellipse cx="8" cy="3" rx="5.500" ry="2.300" fill="#FFF3B0" stroke="#C89A2A" stroke-width="1"/></svg>
<span id="t29" class="t " style="left:91px;top:384.5px;font-size:12px;line-height:16px;transform:scaleX(0.9211);">ERP10TrainReports</span>
<svg style="left:55px;top:408.0px;" width="9" height="9" viewBox="0 0 9 9"><rect x="0.5" y="0.5" width="8" height="8" fill="#F7F7F7" stroke="#9A9A9A"/><path d="M2 4.5h5" stroke="#222" stroke-width="1"/><path d="M4.5 2v5" stroke="#333" stroke-width="1"/></svg>
<svg style="left:70px;top:403px;" width="16" height="17" viewBox="0 0 16 17"><path d="M2.500 3v10.600c0 1.300 2.400 2.100 5.500 2.100s5.500-.8 5.500-2.100V3z" fill="url(#dg)" stroke="#B88A22" stroke-width="1"/><ellipse cx="8" cy="3" rx="5.500" ry="2.300" fill="#FFF3B0" stroke="#C89A2A" stroke-width="1"/></svg>
<span id="t30" class="t " style="left:91px;top:402.5px;font-size:12px;line-height:16px;transform:scaleX(0.8345);">ESCDB</span>
<svg style="left:55px;top:426.0px;" width="9" height="9" viewBox="0 0 9 9"><rect x="0.5" y="0.5" width="8" height="8" fill="#F7F7F7" stroke="#9A9A9A"/><path d="M2 4.5h5" stroke="#222" stroke-width="1"/><path d="M4.5 2v5" stroke="#333" stroke-width="1"/></svg>
<svg style="left:70px;top:421px;" width="16" height="17" viewBox="0 0 16 17"><path d="M2.500 3v10.600c0 1.300 2.400 2.100 5.500 2.100s5.500-.8 5.500-2.100V3z" fill="url(#dg)" stroke="#B88A22" stroke-width="1"/><ellipse cx="8" cy="3" rx="5.500" ry="2.300" fill="#FFF3B0" stroke="#C89A2A" stroke-width="1"/></svg>
<span id="t31" class="t " style="left:91px;top:420.5px;font-size:12px;line-height:16px;transform:scaleX(0.9387);">ReportServer</span>
<svg style="left:55px;top:444.0px;" width="9" height="9" viewBox="0 0 9 9"><rect x="0.5" y="0.5" width="8" height="8" fill="#F7F7F7" stroke="#9A9A9A"/><path d="M2 4.5h5" stroke="#222" stroke-width="1"/><path d="M4.5 2v5" stroke="#333" stroke-width="1"/></svg>
<svg style="left:70px;top:439px;" width="16" height="17" viewBox="0 0 16 17"><path d="M2.500 3v10.600c0 1.300 2.400 2.100 5.500 2.100s5.500-.8 5.500-2.100V3z" fill="url(#dg)" stroke="#B88A22" stroke-width="1"/><ellipse cx="8" cy="3" rx="5.500" ry="2.300" fill="#FFF3B0" stroke="#C89A2A" stroke-width="1"/></svg>
<span id="t32" class="t " style="left:91px;top:438.5px;font-size:12px;line-height:16px;transform:scaleX(0.9627);">ReportServerTempDB</span>
<svg style="left:55px;top:462.0px;" width="9" height="9" viewBox="0 0 9 9"><rect x="0.5" y="0.5" width="8" height="8" fill="#F7F7F7" stroke="#9A9A9A"/><path d="M2 4.5h5" stroke="#222" stroke-width="1"/><path d="M4.5 2v5" stroke="#333" stroke-width="1"/></svg>
<svg style="left:70px;top:457px;" width="16" height="17" viewBox="0 0 16 17"><path d="M2.500 3v10.600c0 1.300 2.400 2.100 5.500 2.100s5.500-.8 5.500-2.100V3z" fill="url(#dg)" stroke="#B88A22" stroke-width="1"/><ellipse cx="8" cy="3" rx="5.500" ry="2.300" fill="#FFF3B0" stroke="#C89A2A" stroke-width="1"/></svg>
<span id="t33" class="t " style="left:91px;top:456.5px;font-size:12px;line-height:16px;transform:scaleX(0.9290);">SearchIndex10</span>
<svg style="left:55px;top:480.0px;" width="9" height="9" viewBox="0 0 9 9"><rect x="0.5" y="0.5" width="8" height="8" fill="#F7F7F7" stroke="#9A9A9A"/><path d="M2 4.5h5" stroke="#222" stroke-width="1"/><path d="M4.5 2v5" stroke="#333" stroke-width="1"/></svg>
<svg style="left:70px;top:475px;" width="16" height="17" viewBox="0 0 16 17"><path d="M2.500 3v10.600c0 1.300 2.400 2.100 5.500 2.100s5.500-.8 5.500-2.100V3z" fill="url(#dg)" stroke="#B88A22" stroke-width="1"/><ellipse cx="8" cy="3" rx="5.500" ry="2.300" fill="#FFF3B0" stroke="#C89A2A" stroke-width="1"/></svg>
<span id="t34" class="t " style="left:91px;top:474.5px;font-size:12px;line-height:16px;transform:scaleX(0.9607);">TestData</span>
<svg style="left:36px;top:498.0px;" width="9" height="9" viewBox="0 0 9 9"><rect x="0.5" y="0.5" width="8" height="8" fill="#F7F7F7" stroke="#9A9A9A"/><path d="M2 4.5h5" stroke="#222" stroke-width="1"/><path d="M4.5 2v5" stroke="#333" stroke-width="1"/></svg>
<svg style="left:51px;top:493px;" width="16" height="16" viewBox="0 0 16 16"><path d="M0.500 14v-10.500l1-1h4l1.500 1.500h7.500v10z" fill="url(#fg)" stroke="#C9A850" stroke-width="1"/><path d="M1 14h14v-9" fill="none" stroke="#7A5A18" stroke-width="1.200"/><path d="M1.500 5h12.500" stroke="#FFFBE0" stroke-width="1"/></svg>
<span id="t35" class="t " style="left:72px;top:492.5px;font-size:12px;line-height:16px;transform:scaleX(0.9686);">Security</span>
<svg style="left:36px;top:516.0px;" width="9" height="9" viewBox="0 0 9 9"><rect x="0.5" y="0.5" width="8" height="8" fill="#F7F7F7" stroke="#9A9A9A"/><path d="M2 4.5h5" stroke="#222" stroke-width="1"/><path d="M4.5 2v5" stroke="#333" stroke-width="1"/></svg>
<svg style="left:51px;top:511px;" width="16" height="16" viewBox="0 0 16 16"><path d="M0.500 14v-10.500l1-1h4l1.500 1.500h7.500v10z" fill="url(#fg)" stroke="#C9A850" stroke-width="1"/><path d="M1 14h14v-9" fill="none" stroke="#7A5A18" stroke-width="1.200"/><path d="M1.500 5h12.500" stroke="#FFFBE0" stroke-width="1"/></svg>
<span id="t36" class="t " style="left:72px;top:510.5px;font-size:12px;line-height:16px;transform:scaleX(0.9451);">Server Objects</span>
<svg style="left:36px;top:534.0px;" width="9" height="9" viewBox="0 0 9 9"><rect x="0.5" y="0.5" width="8" height="8" fill="#F7F7F7" stroke="#9A9A9A"/><path d="M2 4.5h5" stroke="#222" stroke-width="1"/><path d="M4.5 2v5" stroke="#333" stroke-width="1"/></svg>
<svg style="left:51px;top:529px;" width="16" height="16" viewBox="0 0 16 16"><path d="M0.500 14v-10.500l1-1h4l1.500 1.500h7.500v10z" fill="url(#fg)" stroke="#C9A850" stroke-width="1"/><path d="M1 14h14v-9" fill="none" stroke="#7A5A18" stroke-width="1.200"/><path d="M1.500 5h12.500" stroke="#FFFBE0" stroke-width="1"/></svg>
<span id="t37" class="t " style="left:72px;top:528.5px;font-size:12px;line-height:16px;transform:scaleX(0.9853);">Replication</span>
<svg style="left:36px;top:552.0px;" width="9" height="9" viewBox="0 0 9 9"><rect x="0.5" y="0.5" width="8" height="8" fill="#F7F7F7" stroke="#9A9A9A"/><path d="M2 4.5h5" stroke="#222" stroke-width="1"/><path d="M4.5 2v5" stroke="#333" stroke-width="1"/></svg>
<svg style="left:51px;top:547px;" width="16" height="16" viewBox="0 0 16 16"><path d="M0.500 14v-10.500l1-1h4l1.500 1.500h7.500v10z" fill="url(#fg)" stroke="#C9A850" stroke-width="1"/><path d="M1 14h14v-9" fill="none" stroke="#7A5A18" stroke-width="1.200"/><path d="M1.500 5h12.500" stroke="#FFFBE0" stroke-width="1"/></svg>
<span id="t38" class="t " style="left:72px;top:546.5px;font-size:12px;line-height:16px;transform:scaleX(1.0093);">AlwaysOn High Availability</span>
<svg style="left:36px;top:570.0px;" width="9" height="9" viewBox="0 0 9 9"><rect x="0.5" y="0.5" width="8" height="8" fill="#F7F7F7" stroke="#9A9A9A"/><path d="M2 4.5h5" stroke="#222" stroke-width="1"/><path d="M4.5 2v5" stroke="#333" stroke-width="1"/></svg>
<svg style="left:51px;top:565px;" width="16" height="16" viewBox="0 0 16 16"><path d="M0.500 14v-10.500l1-1h4l1.500 1.500h7.500v10z" fill="url(#fg)" stroke="#C9A850" stroke-width="1"/><path d="M1 14h14v-9" fill="none" stroke="#7A5A18" stroke-width="1.200"/><path d="M1.500 5h12.500" stroke="#FFFBE0" stroke-width="1"/></svg>
<span id="t39" class="t " style="left:72px;top:564.5px;font-size:12px;line-height:16px;transform:scaleX(1.0065);">Management</span>
<svg style="left:36px;top:588.0px;" width="9" height="9" viewBox="0 0 9 9"><rect x="0.5" y="0.5" width="8" height="8" fill="#F7F7F7" stroke="#9A9A9A"/><path d="M2 4.5h5" stroke="#222" stroke-width="1"/><path d="M4.5 2v5" stroke="#333" stroke-width="1"/></svg>
<svg style="left:51px;top:583px;" width="16" height="16" viewBox="0 0 16 16"><path d="M0.500 14v-10.500l1-1h4l1.500 1.500h7.500v10z" fill="url(#fg)" stroke="#C9A850" stroke-width="1"/><path d="M1 14h14v-9" fill="none" stroke="#7A5A18" stroke-width="1.200"/><path d="M1.500 5h12.500" stroke="#FFFBE0" stroke-width="1"/></svg>
<span id="t40" class="t " style="left:72px;top:582.5px;font-size:12px;line-height:16px;transform:scaleX(0.9697);">Integration Services Catalogs</span>
<svg style="left:36px;top:606.0px;" width="9" height="9" viewBox="0 0 9 9"><rect x="0.5" y="0.5" width="8" height="8" fill="#F7F7F7" stroke="#9A9A9A"/><path d="M2 4.5h5" stroke="#222" stroke-width="1"/><path d="M4.5 2v5" stroke="#333" stroke-width="1"/></svg>
<svg style="left:51px;top:601px;" width="16" height="16" viewBox="0 0 16 16"><rect x="1.500" y="2.500" width="9" height="12" fill="#fff" stroke="#7A8AA0"/><path d="M3 5h4M3 7.500h4M3 10h3" stroke="#6A8AC0"/><circle cx="9" cy="4" r="3" fill="#fff" stroke="#555"/><path d="M9 2.500v1.700h1.300" stroke="#333" fill="none" stroke-width="0.800"/><circle cx="11.500" cy="11.500" r="3.800" fill="#2E9E2E" stroke="#fff" stroke-width="0.700"/><path d="M10.300 9.500l3.200 2-3.200 2z" fill="#fff"/></svg>
<span id="t41" class="t " style="left:72px;top:600.5px;font-size:12px;line-height:16px;transform:scaleX(0.9451);">SQL Server Agent</span>
<div style="left:267px;top:103px;width:247px;height:22px;background:#FFF2D0;border-radius:3px 3px 0 0;"></div>
<div style="left:267px;top:123px;width:1371px;height:4px;background:#FFF2D0;"></div>
<span id="t42" class="t " style="left:271.5px;top:105.5px;font-size:12px;line-height:16px;transform:scaleX(0.9354);">SQLQuery1.sql - E...BE\ERPADMIN (570))*</span>
<div style="left:267px;top:127px;width:1371px;height:424px;background:#fff;"></div>
<div style="left:267px;top:127px;width:17px;height:424px;background:#F0F0F0;"></div>
<div style="left:286.5px;top:127px;width:5px;height:48px;background:#FFE866;"></div>
<div style="left:305px;top:158.5px;width:273px;height:17px;background:#ADD6FF;"></div>
<div style="left:485px;top:175px;width:68px;height:2px;background:#E0EE00;"></div>
<div style="left:553px;top:175px;width:29px;height:3px;background:#FFFF00;"></div>
<div style="left:578px;top:162px;width:4px;height:16px;background:#FFFF00;"></div>
<div style="left:485px;top:160px;width:93px;height:16px;background:#ADD600;"></div>
<div style="left:520px;top:159px;width:50px;height:2px;background:#ADD600;"></div>
<span id="t43" class="t " style="left:305.2px;top:128px;font-size:12px;line-height:16px;font-family:'Liberation Mono', monospace;color:#0000FF;letter-spacing:-0.2px;">select</span>
<span id="t44" class="t " style="left:347.2px;top:128px;font-size:12px;line-height:16px;font-family:'Liberation Mono', monospace;letter-spacing:-0.2px;"> </span>
<span id="t45" class="t " style="left:354.2px;top:128px;font-size:12px;line-height:16px;font-family:'Liberation Mono', monospace;color:#808080;letter-spacing:-0.2px;">*</span>
<span id="t46" class="t " style="left:361.2px;top:128px;font-size:12px;line-height:16px;font-family:'Liberation Mono', monospace;letter-spacing:-0.2px;"> </span>
<span id="t47" class="t " style="left:368.2px;top:128px;font-size:12px;line-height:16px;font-family:'Liberation Mono', monospace;color:#0000FF;letter-spacing:-0.2px;">from</span>
<span id="t48" class="t " style="left:396.2px;top:128px;font-size:12px;line-height:16px;font-family:'Liberation Mono', monospace;letter-spacing:-0.2px;"> ice</span>
<span id="t49" class="t " style="left:424.2px;top:128px;font-size:12px;line-height:16px;font-family:'Liberation Mono', monospace;color:#808080;letter-spacing:-0.2px;">.</span>
<span id="t50" class="t " style="left:431.2px;top:128px;font-size:12px;line-height:16px;font-family:'Liberation Mono', monospace;letter-spacing:-0.2px;">SysTask</span>
<span id="t51" class="t " style="left:305.2px;top:160px;font-size:12px;line-height:16px;font-family:'Liberation Mono', monospace;color:#0000FF;letter-spacing:-0.2px;">select</span>
<span id="t52" class="t " style="left:347.2px;top:160px;font-size:12px;line-height:16px;font-family:'Liberation Mono', monospace;letter-spacing:-0.2px;"> LastAction</span>
<span id="t53" class="t " style="left:424.2px;top:160px;font-size:12px;line-height:16px;font-family:'Liberation Mono', monospace;color:#808080;letter-spacing:-0.2px;">,</span>
<span id="t54" class="t " style="left:431.2px;top:160px;font-size:12px;line-height:16px;font-family:'Liberation Mono', monospace;letter-spacing:-0.2px;"> </span>
<span id="t55" class="t " style="left:438.2px;top:160px;font-size:12px;line-height:16px;font-family:'Liberation Mono', monospace;color:#808080;letter-spacing:-0.2px;">*</span>
<span id="t56" class="t " style="left:445.2px;top:160px;font-size:12px;line-height:16px;font-family:'Liberation Mono', monospace;letter-spacing:-0.2px;"> </span>
<span id="t57" class="t " style="left:452.2px;top:160px;font-size:12px;line-height:16px;font-family:'Liberation Mono', monospace;color:#0000FF;letter-spacing:-0.2px;">from</span>
<span id="t58" class="t " style="left:480.2px;top:160px;font-size:12px;line-height:16px;font-family:'Liberation Mono', monospace;letter-spacing:-0.2px;"> ice</span>
<span id="t59" class="t " style="left:508.2px;top:160px;font-size:12px;line-height:16px;font-family:'Liberation Mono', monospace;color:#808080;letter-spacing:-0.2px;">.</span>
<span id="t60" class="t " style="left:515.2px;top:160px;font-size:12px;line-height:16px;font-family:'Liberation Mono', monospace;letter-spacing:-0.2px;">SysRptLst</span>
<svg style="left:294px;top:131px;" width="9" height="9" viewBox="0 0 9 9"><rect x="0.5" y="0.5" width="8" height="8" fill="#fff" stroke="#808080"/><path d="M2 4.5h5" stroke="#000"/></svg>
<div style="left:299px;top:141px;width:1px;height:34px;background:#A5A5A5;"></div>
<div style="left:299px;top:174px;width:4px;height:1px;background:#A5A5A5;"></div>
<div style="left:305px;top:159px;width:1px;height:16px;background:#000;"></div>
<div style="left:267px;top:551px;width:1371px;height:17px;background:#F0F0F0;"></div>
<div style="left:267px;top:551px;width:60px;height:14px;background:#fff;"></div>
<div style="left:267px;top:565px;width:60px;height:1px;background:#E3E3E3;"></div>
<span id="t61" class="t " style="left:270.5px;top:552px;font-size:11px;line-height:15px;transform:scaleX(1.0095);">100 %</span>
<div style="left:343px;top:551px;width:1285px;height:17px;background:#fff;border:1px solid #dadada;border-left:none;border-right:none;"></div>
<div style="left:267px;top:568px;width:1371px;height:161px;background:#F0F0F0;"></div>
<div style="left:267px;top:593px;width:1371px;height:1px;background:#A0A0A0;"></div>
<div style="left:267px;top:572px;width:73px;height:23px;background:#fff;border:1px solid #8A8F98;border-bottom:none;"></div>
<div style="left:340px;top:575px;width:80px;height:18px;background:#F0F0F0;border:1px solid #ACACAC;border-bottom:none;border-left:none;"></div>
<span id="t62" class="t " style="left:297.5px;top:576px;font-size:11px;line-height:15px;transform:scaleX(0.9267);">Results</span>
<span id="t63" class="t " style="left:366px;top:578px;font-size:11px;line-height:15px;transform:scaleX(0.9374);">Messages</span>
<div style="left:340px;top:594px;width:1298px;height:1px;background:#fff;"></div>
<div style="left:271px;top:595px;width:1367px;height:1px;background:#828790;"></div>
<div style="left:271px;top:595px;width:1px;height:134px;background:#828790;"></div>
<div style="left:272px;top:596px;width:1366px;height:133px;background:#fff;"></div>
<div style="left:272px;top:596px;width:1366px;height:18px;background:#FCFCFC;border-bottom:1px solid #DCDCDC;"></div>
<div style="left:304px;top:614px;width:1334px;height:1px;background:#E6E6E6;"></div>
<div style="left:303px;top:597px;width:2px;height:16px;background:#E0E0E0;"></div>
<span id="t64" class="t " style="left:309px;top:598px;font-size:11px;line-height:15px;transform:scaleX(0.9538);">LastAction</span>
<div style="left:564px;top:597px;width:2px;height:16px;background:#E0E0E0;"></div>
<span id="t65" class="t " style="left:569px;top:598px;font-size:11px;line-height:15px;transform:scaleX(0.9346);">Company</span>
<div style="left:626px;top:597px;width:2px;height:16px;background:#E0E0E0;"></div>
<span id="t66" class="t " style="left:632px;top:598px;font-size:11px;line-height:15px;transform:scaleX(0.9347);">UserID</span>
<div style="left:674px;top:597px;width:2px;height:16px;background:#E0E0E0;"></div>
<span id="t67" class="t " style="left:679px;top:598px;font-size:11px;line-height:15px;transform:scaleX(0.9477);">CreatedOn</span>
<div style="left:810px;top:597px;width:2px;height:16px;background:#E0E0E0;"></div>
<span id="t68" class="t " style="left:816px;top:598px;font-size:11px;line-height:15px;transform:scaleX(0.9709);">RecSeq</span>
<div style="left:863px;top:597px;width:2px;height:16px;background:#E0E0E0;"></div>
<span id="t69" class="t " style="left:868px;top:598px;font-size:11px;line-height:15px;transform:scaleX(0.9703);">RptDescription</span>
<div style="left:951px;top:597px;width:2px;height:16px;background:#E0E0E0;"></div>
<span id="t70" class="t " style="left:956px;top:598px;font-size:11px;line-height:15px;transform:scaleX(0.9815);">SysTaskNum</span>
<div style="left:1032px;top:597px;width:2px;height:16px;background:#E0E0E0;"></div>
<span id="t71" class="t " style="left:1038px;top:598px;font-size:11px;line-height:15px;transform:scaleX(0.9306);">HostComputer</span>
<div style="left:1118px;top:597px;width:2px;height:16px;background:#E0E0E0;"></div>
<span id="t72" class="t " style="left:1124px;top:598px;font-size:11px;line-height:15px;transform:scaleX(0.9134);">FileName</span>
<div style="left:1399px;top:597px;width:2px;height:16px;background:#E0E0E0;"></div>
<span id="t73" class="t " style="left:1404px;top:598px;font-size:11px;line-height:15px;transform:scaleX(0.9728);">RptStatus</span>
<div style="left:1462px;top:597px;width:2px;height:16px;background:#E0E0E0;"></div>
<span id="t74" class="t " style="left:1467px;top:598px;font-size:11px;line-height:15px;transform:scaleX(1.0296);">LastActionOn</span>
<div style="left:1598px;top:597px;width:2px;height:16px;background:#E0E0E0;"></div>
<span id="t75" class="t " style="left:1603px;top:598px;font-size:11px;line-height:15px;">LastAction</span>
<div style="left:304px;top:633px;width:1334px;height:1px;background:#E9E9E9;"></div>
<div style="left:272px;top:615px;width:31px;height:18px;background:#FCFCFC;border:1px solid #E2E2E2;"></div>
<div style="left:303px;top:615px;width:1px;height:18px;background:#EDEDED;"></div>
<div style="left:564px;top:615px;width:1px;height:18px;background:#EDEDED;"></div>
<div style="left:626px;top:615px;width:1px;height:18px;background:#EDEDED;"></div>
<div style="left:674px;top:615px;width:1px;height:18px;background:#EDEDED;"></div>
<div style="left:810px;top:615px;width:1px;height:18px;background:#EDEDED;"></div>
<div style="left:863px;top:615px;width:1px;height:18px;background:#EDEDED;"></div>
<div style="left:951px;top:615px;width:1px;height:18px;background:#EDEDED;"></div>
<div style="left:1032px;top:615px;width:1px;height:18px;background:#EDEDED;"></div>
<div style="left:1118px;top:615px;width:1px;height:18px;background:#EDEDED;"></div>
<div style="left:1399px;top:615px;width:1px;height:18px;background:#EDEDED;"></div>
<div style="left:1462px;top:615px;width:1px;height:18px;background:#EDEDED;"></div>
<div style="left:1598px;top:615px;width:1px;height:18px;background:#EDEDED;"></div>
<div style="left:304px;top:652px;width:1334px;height:1px;background:#E9E9E9;"></div>
<div style="left:272px;top:634px;width:31px;height:18px;background:#FCFCFC;border:1px solid #E2E2E2;"></div>
<div style="left:303px;top:634px;width:1px;height:18px;background:#EDEDED;"></div>
<div style="left:564px;top:634px;width:1px;height:18px;background:#EDEDED;"></div>
<div style="left:626px;top:634px;width:1px;height:18px;background:#EDEDED;"></div>
<div style="left:674px;top:634px;width:1px;height:18px;background:#EDEDED;"></div>
<div style="left:810px;top:634px;width:1px;height:18px;background:#EDEDED;"></div>
<div style="left:863px;top:634px;width:1px;height:18px;background:#EDEDED;"></div>
<div style="left:951px;top:634px;width:1px;height:18px;background:#EDEDED;"></div>
<div style="left:1032px;top:634px;width:1px;height:18px;background:#EDEDED;"></div>
<div style="left:1118px;top:634px;width:1px;height:18px;background:#EDEDED;"></div>
<div style="left:1399px;top:634px;width:1px;height:18px;background:#EDEDED;"></div>
<div style="left:1462px;top:634px;width:1px;height:18px;background:#EDEDED;"></div>
<div style="left:1598px;top:634px;width:1px;height:18px;background:#EDEDED;"></div>
<div style="left:304px;top:671px;width:1334px;height:1px;background:#E9E9E9;"></div>
<div style="left:272px;top:653px;width:31px;height:18px;background:#FCFCFC;border:1px solid #E2E2E2;"></div>
<div style="left:303px;top:653px;width:1px;height:18px;background:#EDEDED;"></div>
<div style="left:564px;top:653px;width:1px;height:18px;background:#EDEDED;"></div>
<div style="left:626px;top:653px;width:1px;height:18px;background:#EDEDED;"></div>
<div style="left:674px;top:653px;width:1px;height:18px;background:#EDEDED;"></div>
<div style="left:810px;top:653px;width:1px;height:18px;background:#EDEDED;"></div>
<div style="left:863px;top:653px;width:1px;height:18px;background:#EDEDED;"></div>
<div style="left:951px;top:653px;width:1px;height:18px;background:#EDEDED;"></div>
<div style="left:1032px;top:653px;width:1px;height:18px;background:#EDEDED;"></div>
<div style="left:1118px;top:653px;width:1px;height:18px;background:#EDEDED;"></div>
<div style="left:1399px;top:653px;width:1px;height:18px;background:#EDEDED;"></div>
<div style="left:1462px;top:653px;width:1px;height:18px;background:#EDEDED;"></div>
<div style="left:1598px;top:653px;width:1px;height:18px;background:#EDEDED;"></div>
<div style="left:304px;top:614px;width:261px;height:20px;background:#E8ECF1;border:1px dotted #000;"></div>
<div style="left:306px;top:616px;width:88px;height:16.5px;background:#E9EC0E;border-radius:1px;"></div>
<svg style="left:0px;top:0px;" width="1638" height="729" viewBox="0 0 1638 729"><polygon points="676,614.300 700,614.500 730,615.500 780,616 800,614 809.300,613.200 809.300,630.500 800,632 790,634.500 735,635 715,632.500 690,630.500 676,629.800" fill="#FFFF0A"/><polygon points="313,648.300 341,637.200 525,637.200 525,651.500 552,651.500 552,667.700 455,667.700 455,669.500 405,669.500 405,670.300 384,670.300 384,671.800 356,671.800 356,673.200 340,673.200 340,674.600 324,674.600 324,658.200 341,655.600 382,654.200 313,653.800" fill="#FFFF0A"/><rect x="1636" y="616" width="2" height="17" fill="#FFFF8A"/></svg>
<span id="t76" class="t " style="left:279px;top:617px;font-size:11px;line-height:15px;">1</span>
<span id="t77" class="t " style="left:311px;top:617px;font-size:11px;line-height:15px;transform:scaleX(0.9579);">Auto Printed</span>
<span id="t78" class="t " style="left:572px;top:617px;font-size:11px;line-height:15px;transform:scaleX(0.9539);">BEV</span>
<span id="t79" class="t " style="left:634px;top:617px;font-size:11px;line-height:15px;transform:scaleX(0.9808);">Ali</span>
<span id="t80" class="t " style="left:681px;top:617px;font-size:11px;line-height:15px;transform:scaleX(0.9857);">2018-11-30 14:51:23.000</span>
<span id="t81" class="t " style="left:818px;top:617px;font-size:11px;line-height:15px;transform:scaleX(0.9804);">143402</span>
<span id="t82" class="t " style="left:870px;top:617px;font-size:11px;line-height:15px;transform:scaleX(0.9417);">Job Traveler</span>
<span id="t83" class="t " style="left:959px;top:617px;font-size:11px;line-height:15px;transform:scaleX(0.9804);">143402</span>
<span id="t84" class="t " style="left:1040px;top:617px;font-size:11px;line-height:15px;transform:scaleX(0.9652);">EPSVR</span>
<span id="t85" class="t " style="left:1126px;top:617px;font-size:11px;line-height:15px;transform:scaleX(1.0112);">\\EPSVR\EpicorData\Reports\Ali\Job Traveler44412...</span>
<span id="t86" class="t " style="left:1469px;top:617px;font-size:11px;line-height:15px;transform:scaleX(0.9857);">2018-11-30 14:51:31.253</span>
<span id="t87" class="t " style="left:1605px;top:617px;font-size:11px;line-height:15px;transform:scaleX(0.95);">Auto Printed</span>
<span id="t88" class="t " style="left:279px;top:636px;font-size:11px;line-height:15px;">2</span>
<span id="t89" class="t " style="left:311px;top:636px;font-size:11px;line-height:15px;transform:scaleX(0.9535);">System error has occurred! Run in preview mode f...</span>
<span id="t90" class="t " style="left:572px;top:636px;font-size:11px;line-height:15px;transform:scaleX(0.9539);">BEV</span>
<span id="t91" class="t " style="left:634px;top:636px;font-size:11px;line-height:15px;transform:scaleX(0.9808);">Ali</span>
<span id="t92" class="t " style="left:681px;top:636px;font-size:11px;line-height:15px;transform:scaleX(0.9857);">2018-11-30 15:32:05.000</span>
<span id="t93" class="t " style="left:818px;top:636px;font-size:11px;line-height:15px;transform:scaleX(0.9804);">143403</span>
<span id="t94" class="t " style="left:870px;top:636px;font-size:11px;line-height:15px;transform:scaleX(0.9417);">Job Traveler</span>
<span id="t95" class="t " style="left:959px;top:636px;font-size:11px;line-height:15px;transform:scaleX(0.9804);">143403</span>
<span id="t96" class="t " style="left:1040px;top:636px;font-size:11px;line-height:15px;transform:scaleX(0.9652);">EPSVR</span>
<span id="t97" class="t " style="left:1126px;top:636px;font-size:11px;line-height:15px;transform:scaleX(1.0112);">\\EPSVR\EpicorData\Reports\Ali\Job Traveler44412...</span>
<span id="t98" class="t " style="left:1469px;top:636px;font-size:11px;line-height:15px;transform:scaleX(0.9857);">2018-11-30 15:32:06.913</span>
<span id="t99" class="t " style="left:1605px;top:636px;font-size:11px;line-height:15px;transform:scaleX(0.95);">System error has occurred!</span>
<span id="t100" class="t " style="left:279px;top:655px;font-size:11px;line-height:15px;">3</span>
<span id="t101" class="t " style="left:311px;top:655px;font-size:11px;line-height:15px;transform:scaleX(0.9535);">System error has occurred! Run in preview mode f...</span>
<span id="t102" class="t " style="left:572px;top:655px;font-size:11px;line-height:15px;transform:scaleX(0.9539);">BEV</span>
<span id="t103" class="t " style="left:634px;top:655px;font-size:11px;line-height:15px;transform:scaleX(0.9808);">Ali</span>
<span id="t104" class="t " style="left:681px;top:655px;font-size:11px;line-height:15px;transform:scaleX(0.9857);">2018-11-30 15:32:52.000</span>
<span id="t105" class="t " style="left:818px;top:655px;font-size:11px;line-height:15px;transform:scaleX(0.9804);">143404</span>
<span id="t106" class="t " style="left:870px;top:655px;font-size:11px;line-height:15px;transform:scaleX(0.9417);">Job Traveler</span>
<span id="t107" class="t " style="left:959px;top:655px;font-size:11px;line-height:15px;transform:scaleX(0.9804);">143404</span>
<span id="t108" class="t " style="left:1040px;top:655px;font-size:11px;line-height:15px;transform:scaleX(0.9652);">EPSVR</span>
<span id="t109" class="t " style="left:1126px;top:655px;font-size:11px;line-height:15px;transform:scaleX(1.0112);">\\EPSVR\EpicorData\Reports\Ali\Job Traveler44412...</span>
<span id="t110" class="t " style="left:1469px;top:655px;font-size:11px;line-height:15px;transform:scaleX(0.9857);">2018-11-30 15:32:54.067</span>
<span id="t111" class="t " style="left:1605px;top:655px;font-size:11px;line-height:15px;transform:scaleX(0.95);">System error has occurred!</span>
<svg style="left:0px;top:0px;" width="22" height="24" viewBox="0 0 22 24"><path d="M4.500 6.500v7c0 .8 1.300 1.200 3 1.200s3-.4 3-1.200v-7z" fill="url(#yl)" stroke="#C89418" stroke-width="0.700"/><ellipse cx="7.500" cy="6.300" rx="3" ry="1.100" fill="#FFEFA0" stroke="#D8A828" stroke-width="0.600"/><rect x="12" y="6" width="1" height="1" fill="#5AC81E"/><rect x="14" y="6" width="1" height="1" fill="#5AC81E"/><rect x="16" y="6" width="1" height="1" fill="#5AC81E"/><rect x="18" y="6" width="1" height="1" fill="#5AC81E"/><rect x="18" y="8" width="1" height="1" fill="#5AC81E"/><rect x="18" y="10" width="1" height="1" fill="#5AC81E"/><rect x="5" y="16" width="1" height="1" fill="#5AC81E"/><rect x="5" y="18" width="1" height="1" fill="#5AC81E"/><rect x="5" y="20" width="1" height="1" fill="#5AC81E"/><rect x="7" y="20" width="1" height="1" fill="#5AC81E"/><path d="M10 20.300l5-5" stroke="#E8A818" stroke-width="1.600" stroke-linecap="round"/><path d="M13.500 12l2.800-.8 3.200 3.700-.9 1.200-1.600-1.500-1.700.8z" fill="#E8ECF4" stroke="#7A86A0" stroke-width="0.600"/><path d="M9.500 12.500l7.800 7.800" stroke="#7A8AB0" stroke-width="1.800"/><path d="M9.800 12.300l7.600 7.600" stroke="#FFFFFF" stroke-width="1.100" stroke-dasharray="1.300 0.400"/><circle cx="9.300" cy="12.200" r="1.600" fill="#C8D0E0" stroke="#6A7AA0" stroke-width="0.700"/><circle cx="9.500" cy="12.500" r="0.700" fill="#E8A818"/></svg>
<svg style="left:-5px;top:-5px;" width="10" height="12" viewBox="0 0 10 12"><circle cx="3" cy="5" r="5.500" fill="#fff" stroke="#9A9A9A" stroke-width="1.200"/></svg>
<svg style="left:217px;top:110px;" width="8" height="5" viewBox="0 0 8 5"><path d="M0 0h8l-4 4.500z" fill="#D8E0EC"/></svg>
<svg style="left:232px;top:106px;" width="9" height="12" viewBox="0 0 9 12"><path d="M2.500 0.500h4v6h-4zM5.500 0.500v6M0.500 6.500h8M4.500 6.500v5" fill="none" stroke="#E8EEF6" stroke-width="1"/></svg>
<svg style="left:247px;top:107px;" width="10" height="10" viewBox="0 0 10 10"><path d="M0.500 0.500l9 9M9.500 0.500l-9 9" stroke="#E8EEF6" stroke-width="1.600"/></svg>
<svg style="left:63.3px;top:133.7px;" width="7" height="4" viewBox="0 0 7 4"><path d="M0 0h6.400l-3.200 3.700z" fill="#1B1B2B"/></svg>
<svg style="left:77px;top:127px;" width="16" height="16" viewBox="0 0 16 16"><rect x="1.500" y="1.500" width="8" height="7" fill="#4A8AE8" stroke="#2A4A90"/><rect x="3" y="3" width="5" height="4" fill="#A8D0FF"/><rect x="0.500" y="9.500" width="10" height="2" fill="#C8D0DC" stroke="#5A6A90" stroke-width="0.800"/><rect x="11.500" y="1.500" width="3" height="7" rx="1" fill="#E8EEF8" stroke="#5A6A90"/><path d="M4 12v2.500h9v-4" fill="none" stroke="#1A9A1A" stroke-width="1.200"/><path d="M10.500 11.500l2.500-3 2.500 3z" fill="#1A9A1A"/></svg>
<svg style="left:99px;top:127px;" width="16" height="16" viewBox="0 0 16 16"><rect x="1.500" y="1.500" width="8" height="7" fill="#4A8AE8" stroke="#2A4A90"/><rect x="3" y="3" width="5" height="4" fill="#A8D0FF"/><rect x="0.500" y="9.500" width="10" height="2" fill="#C8D0DC" stroke="#5A6A90" stroke-width="0.800"/><rect x="11.500" y="1.500" width="3" height="7" rx="1" fill="#E8EEF8" stroke="#5A6A90"/><path d="M4 12v2.500h5" fill="none" stroke="#1A9A1A" stroke-width="1.200"/><path d="M10 10l5 5.500M15 10l-5 5.500" stroke="#E81818" stroke-width="1.500"/></svg>
<svg style="left:125px;top:132px;" width="8" height="8" viewBox="0 0 8 8"><rect x="0" y="0" width="8" height="8" fill="#98A0AE"/><rect x="1" y="1" width="6" height="6" fill="#A8B0BC"/></svg>
<svg style="left:144px;top:128px;" width="14" height="14" viewBox="0 0 14 14"><path d="M0.500 1.500h13l-5 6v6l-3-1.500v-4.500z" fill="#A8AEBA" stroke="#9098A8"/></svg>
<svg style="left:165px;top:127px;" width="16" height="16" viewBox="0 0 16 16"><rect x="0.500" y="0.500" width="15" height="15" fill="#fff" stroke="#3A6AD0"/><rect x="1" y="1" width="14" height="3" fill="url(#bl)"/><path d="M4.500 9c0-2 2-3.500 4-3l-.500-1.500 3 2-3 2v-1.500c-1.500 0-2.500 1-2.500 2zM11.500 9.500c0 2-2 3.500-4 3l.500 1.500-3-2 3-2v1.500c1.500 0 2.500-1 2.500-2z" fill="#1A9A1A"/></svg>
<svg style="left:187px;top:126px;" width="17" height="17" viewBox="0 0 17 17"><path d="M3.500 1.500h10.500c1.300 0 1.300 2.200 0 2.200h-1.500v9.300h-9.500c-1.300 0-1.300-2.200 0-2.200h2v-7c0-1.200-1.500-2.300-1.500-2.300z" fill="#F6F8FC" stroke="#7A869C" stroke-width="0.900"/><path d="M6.500 4.500h4.500M6.500 6.500h4.500M6.500 8.500h3" stroke="#8AA8E0" stroke-width="0.900"/><circle cx="11.500" cy="11.800" r="4.700" fill="#D83838" stroke="#F0C8C8" stroke-width="0.600"/><path d="M9.500 9.800l4 4M13.500 9.800l-4 4" stroke="#fff" stroke-width="1.700"/></svg>
<svg style="left:499px;top:109px;" width="10" height="10" viewBox="0 0 10 10"><path d="M1 1l8 8M9 1l-8 8" stroke="#3A3A3A" stroke-width="1.600"/></svg>
<svg style="left:317.3px;top:557.7px;" width="7" height="4" viewBox="0 0 7 4"><path d="M0 0h6.400l-3.200 3.700z" fill="#1B1B2B"/></svg>
<div style="left:327px;top:551px;width:17px;height:17px;background:#fff;border:1px solid #dadada;"></div>
<svg style="left:332px;top:555px;" width="6" height="9" viewBox="0 0 6 9"><path d="M5 0.500l-4 4 4 4" fill="none" stroke="#5A5A5A" stroke-width="1.300"/></svg>
<div style="left:1627px;top:551px;width:11px;height:17px;background:#fff;border:1px solid #dadada;border-right:none;"></div>
<svg style="left:1631px;top:555px;" width="6" height="9" viewBox="0 0 6 9"><path d="M1 0.500l4 4-4 4" fill="none" stroke="#5A5A5A" stroke-width="1.300"/></svg>
<svg style="left:276px;top:576px;" width="14" height="13" viewBox="0 0 14 13"><rect x="0.500" y="0.500" width="13" height="12" fill="#fff" stroke="#5A6A98"/><rect x="1" y="1" width="12" height="2.500" fill="#4A6AC0"/><path d="M1 6.500h12M1 9.500h12M5 3.500v9M9 3.500v9" stroke="#8A98C0" stroke-width="0.800"/></svg>
<svg style="left:345px;top:576px;" width="16" height="16" viewBox="0 0 16 16"><path d="M1 1.500l4.500-1 1.500 .8v11.500l-5 1.200-1-.8z" fill="#DDE6F4" stroke="#8A98B8" stroke-width="0.800"/><path d="M1.500 4l4.500-1M1.500 6l4.500-1" stroke="#8A98B8" stroke-width="0.700"/><rect x="2" y="10.500" width="1.200" height="1.200" fill="#3AB83A"/><path d="M6.500 4.500h4.500l2.500 2.500v8h-7z" fill="#fff" stroke="#6A7A98" stroke-width="0.800"/><path d="M8 8h4M8 10h4M8 12h4" stroke="#E8482A" stroke-width="1" stroke-dasharray="2.500 0.700"/><path d="M12 10h1M12 12h1" stroke="#3AA83A" stroke-width="1"/></svg>
<svg style="left:-8px;top:534px;" width="14" height="16" viewBox="0 0 14 16"><circle cx="6.500" cy="7.500" r="5" fill="#fff" stroke="#ABABAB" stroke-width="1.600"/></svg>
<svg style="left:950px;top:-6px;" width="18" height="14" viewBox="0 0 18 14"><circle cx="8.500" cy="7.200" r="4.700" fill="#fff" stroke="#A8A2A2" stroke-width="1.300"/></svg>
</div></body></html>
